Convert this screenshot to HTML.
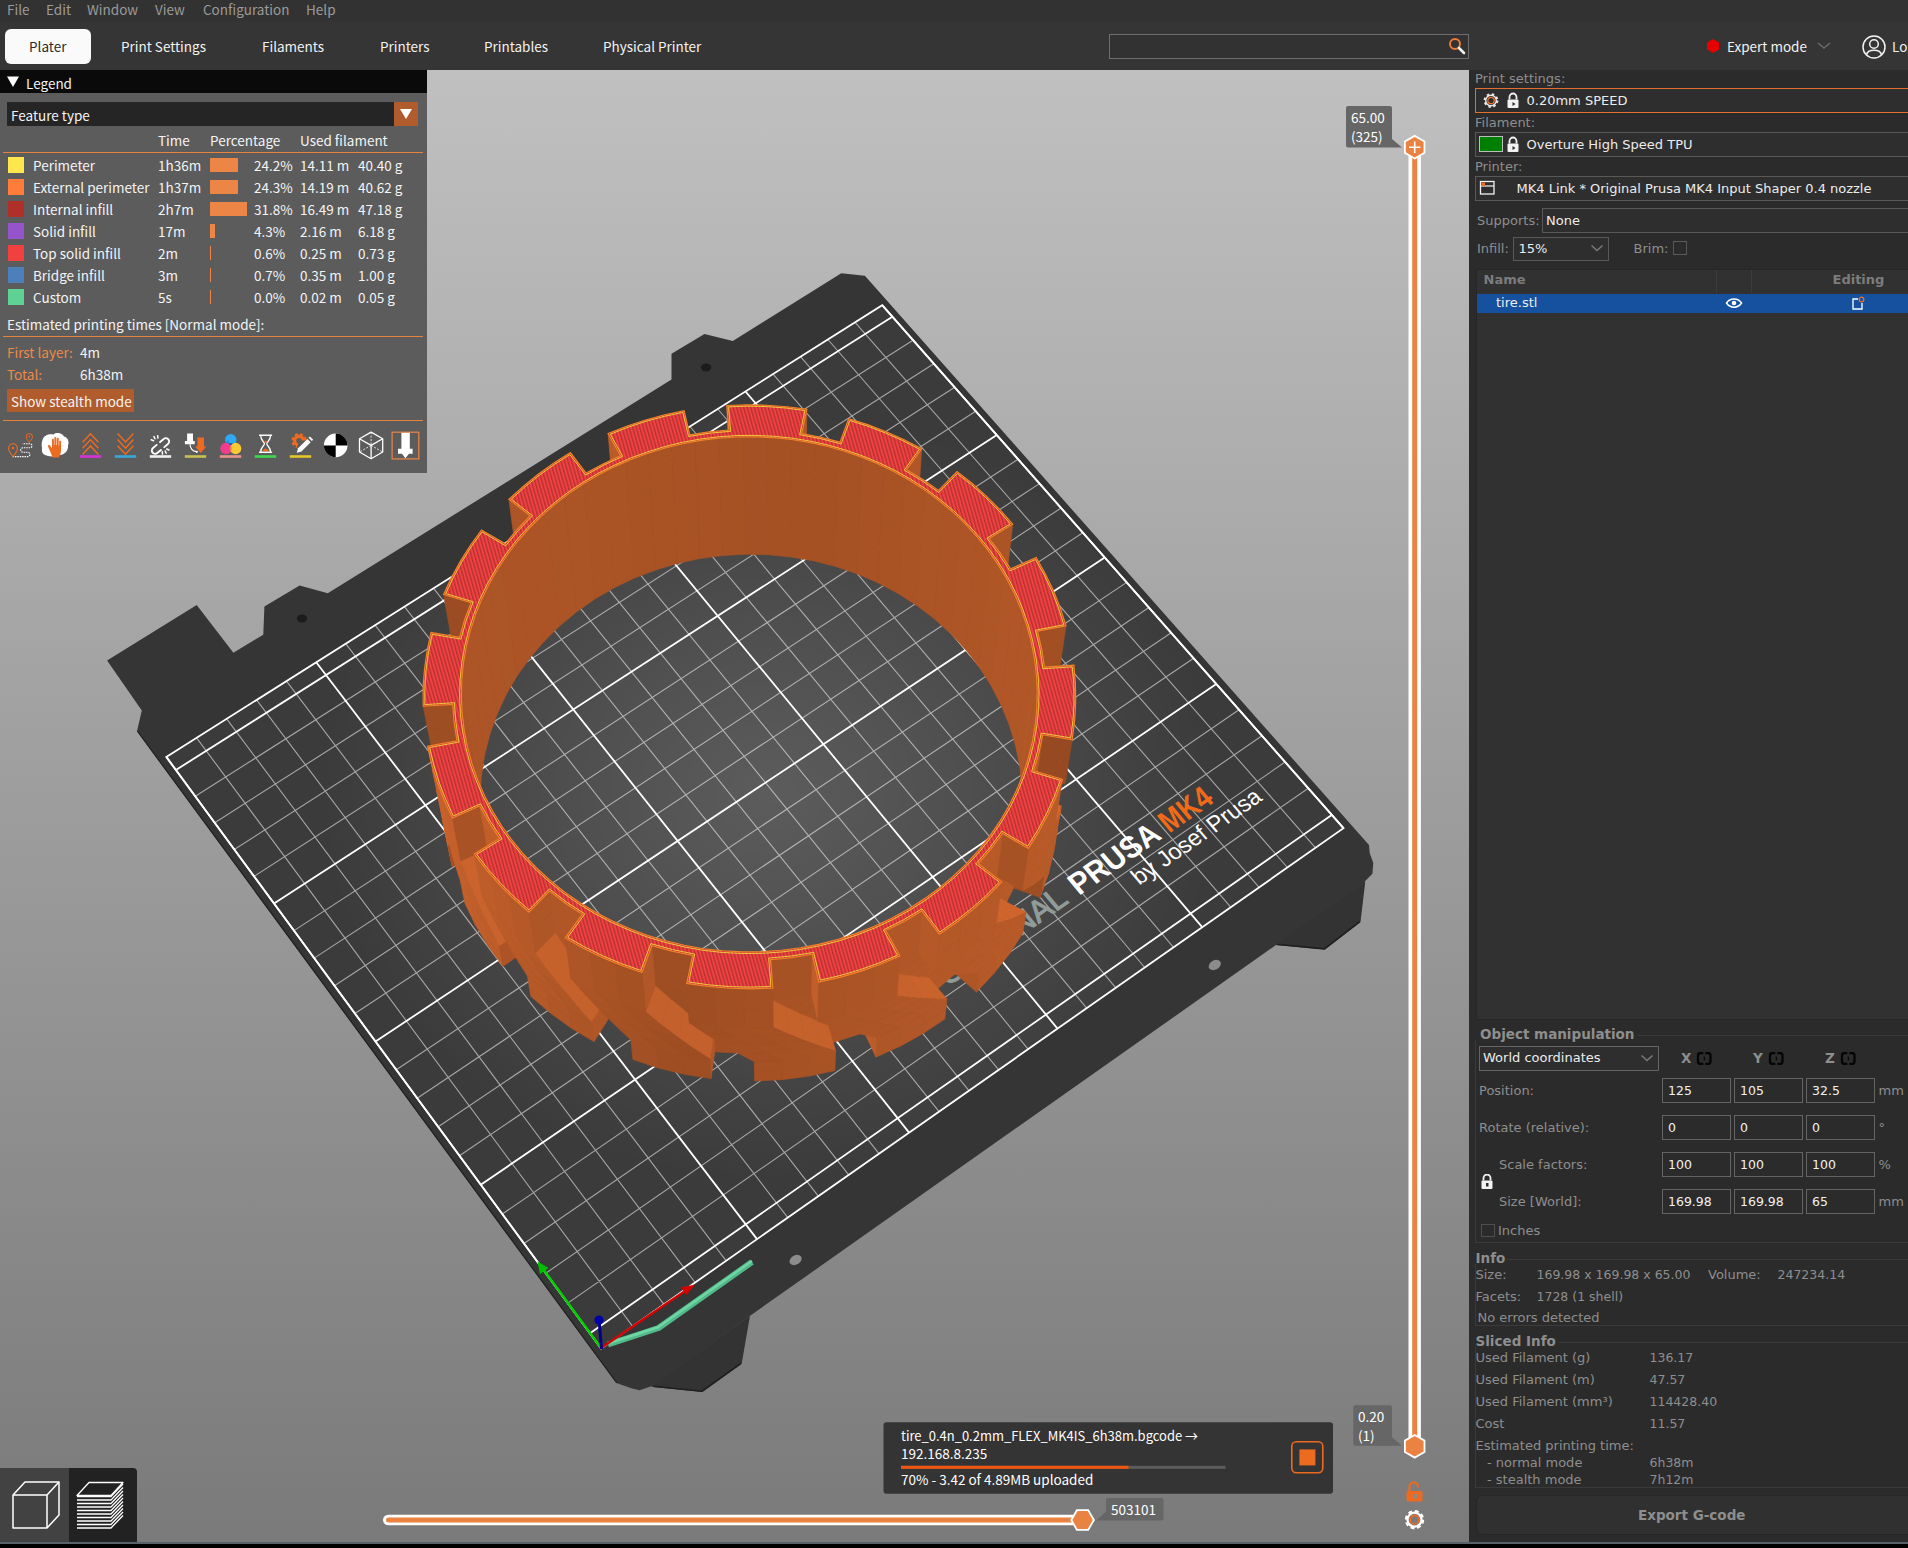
<!DOCTYPE html>
<html><head><meta charset="utf-8"><title>PrusaSlicer</title>
<style>
html,body{margin:0;padding:0;background:#000;}
body{width:1908px;height:1548px;position:relative;overflow:hidden;font-family:"DejaVu Sans","Liberation Sans",sans-serif;font-size:13px;color:#e6e6e6;}
.abs{position:absolute;white-space:nowrap;}
.ui{font-family:"Noto Sans CJK SC","DejaVu Sans Condensed","Liberation Sans",sans-serif;font-size:13.5px;line-height:20px;}
.wx{font-family:"DejaVu Sans","Liberation Sans",sans-serif;font-size:13px;line-height:18px;}
.menubar{position:absolute;left:0;top:0;width:1908px;height:21px;background:#323232;}
.menubar span{position:absolute;top:-1.5px;color:#9b9b9b;}
.topbar{position:absolute;left:0;top:21px;width:1908px;height:49px;background:#353535;}
.tab{position:absolute;top:15px;color:#f2f2f2;white-space:nowrap;}
.tabsel{position:absolute;left:5px;top:8px;width:86px;height:35px;border-radius:6px;background:#fafafa;}
.search{position:absolute;left:1109px;top:13px;width:358px;height:23px;border:1px solid #6e6e6e;background:#323232;}
.legend{position:absolute;left:0;top:70px;width:427px;height:403px;background:#5c5c5c;}
.legend .hdr{position:absolute;left:0;top:0;width:427px;height:23px;background:#0a0a0a;}
.legend .t{position:absolute;color:#f4f4f4;white-space:nowrap;}
.legend .o{color:#ec8a48;}
.oline{position:absolute;left:3px;width:420px;height:1px;background:#e8833e;}
.sw{position:absolute;left:8px;width:16px;height:16px;}
.bar{position:absolute;left:210px;height:14px;background:#ed8546;}
.right{position:absolute;left:1469px;top:70px;width:439px;height:1472px;background:#2b2b2b;overflow:hidden;}
.right .l{position:absolute;color:#8e8e8e;white-space:nowrap;}
.right .v{position:absolute;color:#ececec;white-space:nowrap;}
.right .b{position:absolute;color:#8e8e8e;font-weight:bold;font-size:13.5px;white-space:nowrap;}
.right .hd{font-size:13px;color:#7c7c7c;}
.right .n{font-size:12.5px;}
.box{position:absolute;border:1px solid #595959;background:#313131;box-sizing:border-box;}
.inp{position:absolute;border:1px solid #646464;background:#2b2b2b;box-sizing:border-box;height:25px;width:69px;}
.inp span{position:absolute;left:5px;top:3px;color:#f0f0f0;font-size:12.5px;}
.hline{position:absolute;height:1px;background:#3a3a3a;}
.vline{position:absolute;width:1px;background:#3a3a3a;}
.bottomline{position:absolute;left:0;top:1541.5px;width:1908px;height:2.5px;background:#57626a;}
</style></head>
<body>
<div class="menubar"><span class="ui" style="left:7px">File</span><span class="ui" style="left:46px">Edit</span><span class="ui" style="left:87px">Window</span><span class="ui" style="left:155px">View</span><span class="ui" style="left:203px">Configuration</span><span class="ui" style="left:306px">Help</span></div>
<div class="topbar"><div class="tabsel"></div><span class="tab ui" style="left:29px;color:#2a2a2a">Plater</span><span class="tab ui" style="left:121px">Print Settings</span><span class="tab ui" style="left:262px">Filaments</span><span class="tab ui" style="left:380px">Printers</span><span class="tab ui" style="left:484px">Printables</span><span class="tab ui" style="left:603px">Physical Printer</span>
<div class="search"></div>
<svg class="abs" style="left:1446px;top:14px" width="22" height="22" viewBox="0 0 22 22"><circle cx="9" cy="9" r="5" fill="none" stroke="#ed7b36" stroke-width="2"/><line x1="13" y1="13" x2="18" y2="18" stroke="#f0f0f0" stroke-width="2.6" stroke-linecap="round"/></svg>
<svg class="abs" style="left:1704px;top:16px" width="18" height="18" viewBox="-9 -9 18 18"><polygon points="0,-7 6,-3.5 6,3.5 0,7 -6,3.5 -6,-3.5" fill="#e60000"/></svg>
<span class="tab ui" style="left:1727px">Expert mode</span>
<svg class="abs" style="left:1816px;top:20px" width="16" height="10" viewBox="0 0 16 10"><polyline points="2,2 8,7 14,2" fill="none" stroke="#6a6a6a" stroke-width="1.6"/></svg>
<svg class="abs" style="left:1861px;top:13px" width="26" height="26" viewBox="-13 -13 26 26"><circle r="11" fill="none" stroke="#f2f2f2" stroke-width="1.5"/><circle cy="-3" r="4.3" fill="none" stroke="#f2f2f2" stroke-width="1.5"/><path d="M-7.6,8 C-6.5,1.5 6.5,1.5 7.6,8" fill="none" stroke="#f2f2f2" stroke-width="1.5"/></svg>
<span class="tab ui" style="left:1892px">Log in</span>
</div>
<svg style="position:absolute;left:0;top:70px" width="1469" height="1472" viewBox="0 70 1469 1472">
<defs>
<linearGradient id="bg" x1="0" y1="0" x2="0" y2="1"><stop offset="0" stop-color="#c0c0c0"/><stop offset="1" stop-color="#7a7a7a"/></linearGradient>
<radialGradient id="hl"><stop offset="0" stop-color="#ffffff" stop-opacity="0.17"/><stop offset="0.45" stop-color="#ffffff" stop-opacity="0.10"/><stop offset="1" stop-color="#ffffff" stop-opacity="0"/></radialGradient>
<pattern id="redstripe" width="3.4" height="3.4" patternUnits="userSpaceOnUse" patternTransform="rotate(-16)"><rect width="3.4" height="3.4" fill="#f04242"/><rect width="1.4" height="3.4" fill="#b83030"/></pattern>
</defs>
<rect x="0" y="70" width="1469" height="1472" fill="url(#bg)"/>
<polygon points="1364.3,883.7 1359.8,921.7 1324.5,948.8 1275.7,944.3" fill="#333333" stroke="#333333" stroke-width="1.5"/>
<polygon points="748.9,1317.5 741.0,1363.3 702.1,1391.2 653.3,1386.3" fill="#333333" stroke="#333333" stroke-width="1.5"/>
<path d="M1359.8,921.7 L1324.5,948.8 L1275.7,944.3 M741,1363.3 L702.1,1391.2 L653.3,1386.3" fill="none" stroke="#1f1f1f" stroke-width="1.6"/>
<polygon points="107.1,660.5 196.7,605.0 233.4,652.7 263.3,634.7 264.4,606.5 299.6,585.6 327.8,593.3 671.5,379.5 671.5,353.7 704.5,333.9 732.8,341.1 841.3,273.2 864.9,275.7 1369.0,845.0 1369.7,853.0 1373.3,862.9 1372.4,873.7 1365.2,881.0 1364.3,883.7 1277.7,943.8 749.0,1316.5 653.3,1386.3 651.3,1386.3 639.4,1390.2 631.4,1388.2 616.4,1383.1 137.0,731.3 141.8,710.6" fill="#353535"/>
<line x1="137.3" y1="731" x2="616.8" y2="1382.8" stroke="#222222" stroke-width="1.2"/>
<clipPath id="areaclip"><polygon points="601.1,1348.4 1343.5,828.2 882.2,305.2 166.3,756.9"/></clipPath>
<polygon points="601.1,1348.4 1343.5,828.2 882.2,305.2 166.3,756.9" fill="#3b3b3b"/>
<g clip-path="url(#areaclip)"><ellipse cx="770" cy="795" rx="450" ry="385" fill="url(#hl)"/></g>
<path d="M632.6,1326.3L196.6,737.8M663.9,1304.4L226.7,718.8M695.1,1282.5L256.6,699.9M726.2,1260.8L286.5,681.1M787.8,1217.6L345.7,643.7M818.3,1196.2L375.1,625.1M848.7,1174.9L404.4,606.7M879.0,1153.7L433.6,588.3M939.1,1111.6L491.4,551.8M968.9,1090.7L520.2,533.6M998.6,1069.9L548.8,515.6M1028.1,1049.2L577.3,497.6M1086.7,1008.1L633.9,461.9M1115.8,987.8L661.9,444.2M1144.7,967.5L689.9,426.5M1173.5,947.3L717.8,409.0M1230.7,907.2L773.1,374.1M1259.1,887.3L800.5,356.7M1287.4,867.5L827.9,339.5M1315.5,847.8L855.1,322.3M567.8,1303.1L1308.3,788.3M545.8,1273.2L1285.1,762.0M524.0,1243.5L1262.0,735.8M502.3,1214.0L1239.0,709.8M459.4,1155.7L1193.6,658.3M438.2,1126.8L1171.2,632.8M417.2,1098.2L1148.9,607.5M396.3,1069.8L1126.7,582.4M354.9,1013.5L1082.8,532.7M334.5,985.7L1061.1,508.0M314.2,958.1L1039.5,483.6M294.0,930.6L1018.1,459.3M254.1,876.3L975.7,411.2M234.3,849.5L954.7,387.3M214.7,822.8L933.8,363.7M195.3,796.3L913.0,340.2" stroke="#ffffff" stroke-opacity="0.55" stroke-width="1.1" fill="none"/>
<path d="M601.1,1348.4L166.3,756.9M757.0,1239.1L316.2,662.3M909.1,1132.6L462.6,570.0M1057.5,1028.6L605.6,479.7M1202.2,927.2L745.5,391.5M1343.5,828.2L882.2,305.2M590.0,1333.2L1331.7,814.9M480.8,1184.7L1216.3,683.9M375.5,1041.5L1104.7,557.5M274.0,903.4L996.8,435.1M175.9,770.0L892.4,316.8" stroke="#ffffff" stroke-width="1.8" fill="none"/>
<polygon points="601.1,1348.4 1343.5,828.2 882.2,305.2 166.3,756.9" fill="none" stroke="#ffffff" stroke-width="1.8"/>
<g transform="matrix(2.8768 -1.9874 2.2824 2.7169 1079.04 895.83)" font-family="'Liberation Sans',sans-serif"><text x="0" y="0" font-size="8.9" font-weight="700" fill="#ffffff" textLength="29.2" lengthAdjust="spacingAndGlyphs">PRUSA</text><text x="31.4" y="0" font-size="8.9" font-weight="700" fill="#f06a1a" textLength="16.0" lengthAdjust="spacingAndGlyphs">MK4</text><text x="-3.2" y="0" font-size="8.9" font-weight="400" fill="#919c9a" stroke="#919c9a" stroke-width="0.3" text-anchor="end">ORIGINAL</text></g>
<g transform="matrix(2.8591 -1.9827 2.3011 2.7103 1139.37 885.47)" font-family="'Liberation Sans',sans-serif"><text x="0" y="0" font-size="6.6" fill="#ffffff" textLength="43.4" lengthAdjust="spacingAndGlyphs">by Josef Prusa</text></g>
<ellipse cx="302" cy="618.5" rx="5.2" ry="4" fill="#1c1c1c"/>
<ellipse cx="706.1" cy="367.5" rx="5.2" ry="4" fill="#1c1c1c"/>
<ellipse cx="795.6" cy="1260" rx="6.5" ry="4.6" fill="#8c8c8c" transform="rotate(-30 795.6 1260)"/>
<ellipse cx="1214.8" cy="965" rx="6.5" ry="4.6" fill="#8c8c8c" transform="rotate(-30 1214.8 965)"/>
<polyline points="608,1344.5 658.5,1328 752,1262" fill="none" stroke="#52b98a" stroke-width="6" stroke-linejoin="round"/>
<polyline points="608,1343.5 658.5,1327 752,1261" fill="none" stroke="#6fd6a4" stroke-width="2.4" stroke-linejoin="round"/>
<line x1="601" y1="1348" x2="688" y2="1289" stroke="#d60000" stroke-width="2.4"/>
<polygon points="695,1284.5 681,1287.5 686.5,1295" fill="#d60000"/>
<line x1="601" y1="1348" x2="543" y2="1269" stroke="#00d000" stroke-width="2.4"/>
<polygon points="537.5,1261.5 540,1274 548.5,1268" fill="#00c000"/>
<line x1="601.5" y1="1349" x2="599.2" y2="1321" stroke="#00008c" stroke-width="3"/>
<circle cx="599" cy="1320" r="4.6" fill="#0000a8"/>
<g stroke-width="0.7" stroke-linejoin="round">
<polygon points="747.8,547.1 747.5,523.5 747.3,511.1 747.6,534.8" fill="#b15727" stroke="#b15727"/>
<polygon points="679.5,555.5 672.6,532.8 672.0,520.4 678.9,543.3" fill="#bf5e2a" stroke="#bf5e2a"/>
<polygon points="851.8,564.1 861.5,542.1 862.0,529.8 852.2,551.9" fill="#b15727" stroke="#b15727"/>
<polygon points="747.6,534.8 747.3,511.1 747.0,498.6 747.3,522.4" fill="#b15727" stroke="#b15727"/>
<polygon points="584.2,597.3 568.0,578.4 566.7,566.3 582.9,585.2" fill="#b45828" stroke="#b45828"/>
<polygon points="678.9,543.3 672.0,520.4 671.3,507.9 678.2,530.9" fill="#bf5e2a" stroke="#bf5e2a"/>
<polygon points="852.2,551.9 862.0,529.8 862.5,517.3 852.7,539.5" fill="#b15727" stroke="#b15727"/>
<polygon points="941.8,615.3 960.4,598.1 961.5,586.0 942.8,603.3" fill="#ae5526" stroke="#ae5526"/>
<polygon points="784.9,524.2 788.2,500.6 802.9,491.9 798.3,515.4" fill="#ed7434" stroke="#ed7434"/>
<polygon points="678.2,530.9 671.3,507.9 685.1,494.1 690.8,517.5" fill="#e97233" stroke="#e97233"/>
<polygon points="582.9,585.2 566.7,566.3 565.3,554.0 581.6,573.0" fill="#b45828" stroke="#b45828"/>
<polygon points="942.8,603.3 961.5,586.0 962.6,573.8 943.8,591.2" fill="#ae5526" stroke="#ae5526"/>
<polygon points="512.4,668.8 489.1,656.7 487.2,645.0 510.7,657.1" fill="#a55124" stroke="#a55124"/>
<polygon points="886.9,553.9 900.1,533.1 913.6,529.3 899.2,549.6" fill="#eb7334" stroke="#eb7334"/>
<polygon points="690.8,517.5 685.1,494.1 699.2,480.9 703.7,504.5" fill="#ea7333" stroke="#ea7333"/>
<polygon points="798.3,515.4 802.9,491.9 817.7,483.6 811.7,507.1" fill="#ed7434" stroke="#ed7434"/>
<polygon points="581.6,573.0 565.3,554.0 576.3,535.7 591.7,555.5" fill="#e06e31" stroke="#e06e31"/>
<polygon points="1004.7,694.0 1029.7,684.3 1031.2,672.7 1006.1,682.4" fill="#a75225" stroke="#a75225"/>
<polygon points="591.7,555.5 576.3,535.7 587.8,517.9 602.1,538.4" fill="#e16e31" stroke="#e16e31"/>
<polygon points="703.7,504.5 699.2,480.9 713.6,468.1 716.8,492.0" fill="#eb7334" stroke="#eb7334"/>
<polygon points="510.7,657.1 487.2,645.0 485.3,633.0 508.9,645.2" fill="#a55124" stroke="#a55124"/>
<polygon points="899.2,549.6 913.6,529.3 926.9,525.9 911.3,545.8" fill="#eb7334" stroke="#eb7334"/>
<polygon points="811.7,507.1 817.7,483.6 832.4,475.9 825.2,499.2" fill="#ed7434" stroke="#ed7434"/>
<polygon points="969.9,616.3 991.3,601.3 1001.7,601.7 979.3,615.8" fill="#e47032" stroke="#e47032"/>
<polygon points="602.1,538.4 587.8,517.9 599.9,500.4 613.1,521.6" fill="#e36f32" stroke="#e36f32"/>
<polygon points="1006.1,682.4 1031.2,672.7 1032.8,660.9 1007.6,670.6" fill="#a75225" stroke="#a75225"/>
<polygon points="716.8,492.0 713.6,468.1 728.2,455.8 730.1,479.9" fill="#eb7334" stroke="#eb7334"/>
<polygon points="508.9,645.2 485.3,633.0 491.9,611.5 514.9,624.7" fill="#da6b30" stroke="#da6b30"/>
<polygon points="475.3,760.6 447.9,757.4 445.8,746.1 473.3,749.3" fill="#994b22" stroke="#994b22"/>
<polygon points="825.2,499.2 832.4,475.9 847.2,468.8 838.6,491.8" fill="#ed7434" stroke="#ed7434"/>
<polygon points="911.3,545.8 926.9,525.9 940.0,523.1 923.2,542.3" fill="#ea7333" stroke="#ea7333"/>
<polygon points="613.1,521.6 599.9,500.4 612.3,483.4 624.4,505.1" fill="#e47032" stroke="#e47032"/>
<polygon points="514.9,624.7 491.9,611.5 499.1,590.1 521.4,604.4" fill="#db6b30" stroke="#db6b30"/>
<polygon points="979.3,615.8 1001.7,601.7 1011.6,602.5 988.3,615.7" fill="#e26f32" stroke="#e26f32"/>
<polygon points="473.3,749.3 445.8,746.1 443.6,734.7 471.3,737.9" fill="#994b22" stroke="#994b22"/>
<polygon points="521.4,604.4 499.1,590.1 507.0,568.9 528.5,584.2" fill="#db6b30" stroke="#db6b30"/>
<polygon points="923.2,542.3 940.0,523.1 952.8,520.7 934.9,539.3" fill="#e97233" stroke="#e97233"/>
<polygon points="730.1,479.9 728.2,455.8 727.6,430.9 729.5,455.3" fill="#c35f2b" stroke="#c35f2b"/>
<polygon points="801.3,483.4 806.2,459.6 806.5,434.8 801.5,458.8" fill="#b25727" stroke="#b25727"/>
<polygon points="1021.4,703.1 1048.1,696.5 1053.8,699.9 1026.4,705.3" fill="#da6b30" stroke="#da6b30"/>
<polygon points="624.4,505.1 612.3,483.4 610.3,458.7 622.5,480.7" fill="#bb5b29" stroke="#bb5b29"/>
<polygon points="528.5,584.2 507.0,568.9 515.5,548.0 536.3,564.2" fill="#dc6c30" stroke="#dc6c30"/>
<polygon points="988.3,615.7 1011.6,602.5 1021.1,603.7 996.9,615.9" fill="#e16e31" stroke="#e16e31"/>
<polygon points="471.3,737.9 443.6,734.7 444.6,711.5 472.1,715.9" fill="#d4682e" stroke="#d4682e"/>
<polygon points="903.5,518.9 918.3,498.4 920.0,473.9 905.0,494.6" fill="#b05627" stroke="#b05627"/>
<polygon points="472.1,715.9 444.6,711.5 446.3,688.1 473.6,693.8" fill="#d4682f" stroke="#d4682f"/>
<polygon points="1026.4,705.3 1053.8,699.9 1058.7,703.4 1030.9,707.7" fill="#da6b30" stroke="#da6b30"/>
<polygon points="996.9,615.9 1021.1,603.7 1030.0,605.2 1005.0,616.4" fill="#e06e31" stroke="#e06e31"/>
<polygon points="729.5,455.3 727.6,430.9 726.9,405.5 728.8,430.0" fill="#c35f2b" stroke="#c35f2b"/>
<polygon points="536.3,564.2 515.5,548.0 512.2,524.0 533.2,540.3" fill="#ad5526" stroke="#ad5526"/>
<polygon points="473.6,693.8 446.3,688.1 448.7,664.8 475.8,671.6" fill="#d5692f" stroke="#d5692f"/>
<polygon points="801.5,458.8 806.5,434.8 806.8,409.3 801.7,433.5" fill="#b25727" stroke="#b25727"/>
<polygon points="622.5,480.7 610.3,458.7 608.1,433.5 620.5,455.7" fill="#bb5b29" stroke="#bb5b29"/>
<polygon points="475.8,671.6 448.7,664.8 451.9,641.5 478.6,649.5" fill="#d6692f" stroke="#d6692f"/>
<polygon points="984.2,586.6 1007.1,572.5 1009.9,548.7 986.7,562.9" fill="#ab5425" stroke="#ab5425"/>
<polygon points="1030.9,707.7 1058.7,703.4 1063.0,707.1 1034.8,710.2" fill="#d96a30" stroke="#d96a30"/>
<polygon points="905.0,494.6 920.0,473.9 921.7,448.8 906.5,469.7" fill="#b05627" stroke="#b05627"/>
<polygon points="533.2,540.3 512.2,524.0 508.9,499.3 530.1,515.8" fill="#ad5526" stroke="#ad5526"/>
<polygon points="478.6,649.5 451.9,641.5 447.8,618.3 474.8,626.4" fill="#9c4c22" stroke="#9c4c22"/>
<polygon points="1034.8,710.2 1063.0,707.1 1066.7,710.9 1038.0,712.8" fill="#d86a2f" stroke="#d86a2f"/>
<polygon points="986.7,562.9 1009.9,548.7 1012.7,524.2 989.2,538.6" fill="#ab5425" stroke="#ab5425"/>
<polygon points="1031.2,677.7 1059.0,672.4 1062.5,649.5 1034.3,654.8" fill="#a24f24" stroke="#a24f24"/>
<polygon points="474.8,626.4 447.8,618.3 443.6,594.5 471.0,602.7" fill="#9c4c22" stroke="#9c4c22"/>
<polygon points="1034.3,654.8 1062.5,649.5 1066.0,625.9 1037.5,631.3" fill="#a24f24" stroke="#a24f24"/>
<polygon points="768.1,554.7 745.2,554.2 743.0,436.8 767.3,437.3" fill="#a65125" stroke="#a65125"/>
<polygon points="745.2,554.2 722.4,555.6 718.7,438.2 743.0,436.8" fill="#a75225" stroke="#a75225"/>
<polygon points="790.9,556.9 768.1,554.7 767.3,437.3 791.5,439.5" fill="#a65124" stroke="#a65124"/>
<polygon points="722.4,555.6 699.7,558.6 694.7,441.4 718.7,438.2" fill="#a85225" stroke="#a85225"/>
<polygon points="813.5,560.8 790.9,556.9 791.5,439.5 815.3,443.6" fill="#a55124" stroke="#a55124"/>
<polygon points="699.7,558.6 677.4,563.4 671.1,446.4 694.7,441.4" fill="#a85225" stroke="#a85225"/>
<polygon points="835.6,566.4 813.5,560.8 815.3,443.6 838.8,449.5" fill="#a65124" stroke="#a65124"/>
<polygon points="677.4,563.4 655.6,569.9 648.0,453.2 671.1,446.4" fill="#a95325" stroke="#a95325"/>
<polygon points="857.1,573.8 835.6,566.4 838.8,449.5 861.6,457.1" fill="#a75225" stroke="#a75225"/>
<polygon points="655.6,569.9 634.4,578.1 625.5,461.7 648.0,453.2" fill="#a95325" stroke="#a95325"/>
<polygon points="877.9,582.7 857.1,573.8 861.6,457.1 883.6,466.5" fill="#a85225" stroke="#a85225"/>
<polygon points="634.4,578.1 614.1,587.8 604.0,471.9 625.5,461.7" fill="#aa5325" stroke="#aa5325"/>
<polygon points="897.8,593.3 877.9,582.7 883.6,466.5 904.7,477.5" fill="#a95325" stroke="#a95325"/>
<polygon points="614.1,587.8 594.8,599.1 583.5,483.7 604.0,471.9" fill="#aa5425" stroke="#aa5425"/>
<polygon points="916.6,605.3 897.8,593.3 904.7,477.5 924.7,490.1" fill="#aa5325" stroke="#aa5325"/>
<polygon points="594.8,599.1 576.5,611.9 564.1,497.1 583.5,483.7" fill="#ab5426" stroke="#ab5426"/>
<polygon points="934.3,618.8 916.6,605.3 924.7,490.1 943.5,504.2" fill="#ab5426" stroke="#ab5426"/>
<polygon points="576.5,611.9 559.5,626.1 546.0,511.9 564.1,497.1" fill="#ab5426" stroke="#ab5426"/>
<polygon points="950.7,633.7 934.3,618.8 943.5,504.2 960.9,519.7" fill="#ac5426" stroke="#ac5426"/>
<polygon points="559.5,626.1 543.9,641.5 529.4,528.0 546.0,511.9" fill="#ac5426" stroke="#ac5426"/>
<polygon points="965.7,649.7 950.7,633.7 960.9,519.7 976.8,536.5" fill="#ad5526" stroke="#ad5526"/>
<polygon points="543.9,641.5 529.7,658.2 514.3,545.4 529.4,528.0" fill="#ac5426" stroke="#ac5426"/>
<polygon points="979.1,667.0 965.7,649.7 976.8,536.5 991.1,554.5" fill="#ae5526" stroke="#ae5526"/>
<polygon points="529.7,658.2 517.1,675.9 500.9,564.0 514.3,545.4" fill="#ac5426" stroke="#ac5426"/>
<polygon points="990.9,685.2 979.1,667.0 991.1,554.5 1003.6,573.5" fill="#af5626" stroke="#af5626"/>
<polygon points="517.1,675.9 506.2,694.5 489.4,583.5 500.9,564.0" fill="#ac5526" stroke="#ac5526"/>
<polygon points="1000.9,704.4 990.9,685.2 1003.6,573.5 1014.3,593.6" fill="#b05627" stroke="#b05627"/>
<polygon points="506.2,694.5 497.2,714.0 479.7,603.9 489.4,583.5" fill="#ad5526" stroke="#ad5526"/>
<polygon points="1009.1,724.3 1000.9,704.4 1014.3,593.6 1023.0,614.4" fill="#b05627" stroke="#b05627"/>
<polygon points="497.2,714.0 489.9,734.2 472.0,625.0 479.7,603.9" fill="#ad5526" stroke="#ad5526"/>
<polygon points="1015.4,744.8 1009.1,724.3 1023.0,614.4 1029.7,635.9" fill="#b15727" stroke="#b15727"/>
<polygon points="489.9,734.2 484.6,755.0 466.3,646.7 472.0,625.0" fill="#ad5526" stroke="#ad5526"/>
<polygon points="1019.7,765.8 1015.4,744.8 1029.7,635.9 1034.3,657.8" fill="#b15727" stroke="#b15727"/>
<polygon points="484.6,755.0 481.4,776.1 462.8,668.9 466.3,646.7" fill="#ad5526" stroke="#ad5526"/>
<polygon points="1022.0,787.1 1019.7,765.8 1034.3,657.8 1036.8,680.2" fill="#b25727" stroke="#b25727"/>
<polygon points="481.4,776.1 480.1,797.5 461.4,691.2 462.8,668.9" fill="#ac5526" stroke="#ac5526"/>
<polygon points="1022.2,808.6 1022.0,787.1 1036.8,680.2 1037.1,702.7" fill="#b25727" stroke="#b25727"/>
<polygon points="480.1,797.5 480.9,818.9 462.2,713.7 461.4,691.2" fill="#ac5426" stroke="#ac5426"/>
<polygon points="1020.3,830.1 1022.2,808.6 1037.1,702.7 1035.2,725.2" fill="#b25727" stroke="#b25727"/>
<polygon points="480.9,818.9 483.8,840.3 465.2,736.1 462.2,713.7" fill="#ac5426" stroke="#ac5426"/>
<polygon points="1030.4,789.5 1058.3,789.2 1060.1,778.1 1032.0,778.4" fill="#9d4d22" stroke="#9d4d22"/>
<polygon points="1032.0,778.4 1060.1,778.1 1061.9,766.8 1033.6,767.1" fill="#9d4d22" stroke="#9d4d22"/>
<polygon points="447.3,842.7 452.2,866.2 450.1,855.5 445.1,831.9" fill="#c9622c" stroke="#c9622c"/>
<polygon points="479.5,859.4 452.2,866.2 450.1,855.5 477.5,848.7" fill="#a35024" stroke="#a35024"/>
<polygon points="1048.1,874.6 1053.9,851.3 1055.6,840.4 1049.9,863.9" fill="#b95b29" stroke="#b95b29"/>
<polygon points="479.5,859.4 491.1,893.0 489.2,882.4 477.5,848.7" fill="#c6612c" stroke="#c6612c"/>
<polygon points="1040.2,897.5 1048.1,874.6 1049.9,863.9 1041.9,886.9" fill="#b95b29" stroke="#b95b29"/>
<polygon points="445.1,831.9 450.1,855.5 447.9,844.6 442.9,820.9" fill="#c9622c" stroke="#c9622c"/>
<polygon points="1013.6,887.9 1040.2,897.5 1041.9,886.9 1015.2,877.2" fill="#9e4e23" stroke="#9e4e23"/>
<polygon points="464.9,903.1 475.5,925.1 473.5,914.7 462.8,892.6" fill="#c3602b" stroke="#c3602b"/>
<polygon points="477.5,848.7 450.1,855.5 447.9,844.6 475.5,837.8" fill="#a35024" stroke="#a35024"/>
<polygon points="997.7,920.1 1013.6,887.9 1015.2,877.2 999.2,909.6" fill="#b95b29" stroke="#b95b29"/>
<polygon points="1049.9,863.9 1055.6,840.4 1057.4,829.5 1051.6,853.1" fill="#b95b29" stroke="#b95b29"/>
<polygon points="477.5,848.7 489.2,882.4 487.3,871.6 475.5,837.8" fill="#c6612c" stroke="#c6612c"/>
<polygon points="475.5,925.1 488.3,946.3 486.4,936.0 473.5,914.7" fill="#c15e2a" stroke="#c15e2a"/>
<polygon points="1032.7,802.3 1061.0,805.6 1060.7,810.0 1032.4,805.5" fill="#d5682f" stroke="#d5682f"/>
<polygon points="1041.9,886.9 1049.9,863.9 1051.6,853.1 1043.6,876.2" fill="#b95b29" stroke="#b95b29"/>
<polygon points="1009.3,953.9 1022.8,933.1 1024.4,922.7 1010.8,943.6" fill="#b85a28" stroke="#b85a28"/>
<polygon points="1057.4,829.5 1061.0,805.6 1060.7,810.0 1055.9,833.9" fill="#b95b29" stroke="#b95b29"/>
<polygon points="1015.2,877.2 1041.9,886.9 1043.6,876.2 1016.7,866.4" fill="#9e4e23" stroke="#9e4e23"/>
<polygon points="475.5,837.8 447.9,844.6 442.8,821.7 470.9,816.1" fill="#ce652d" stroke="#ce652d"/>
<polygon points="488.3,946.3 503.1,966.4 501.2,956.2 486.4,936.0" fill="#be5d2a" stroke="#be5d2a"/>
<polygon points="525.9,950.3 503.1,966.4 501.2,956.2 524.3,940.1" fill="#ac5426" stroke="#ac5426"/>
<polygon points="462.8,892.6 473.5,914.7 471.5,904.2 460.7,881.9" fill="#c3602b" stroke="#c3602b"/>
<polygon points="999.2,909.6 1015.2,877.2 1016.7,866.4 1000.6,899.0" fill="#b95b29" stroke="#b95b29"/>
<polygon points="525.9,950.3 551.3,977.5 549.7,967.3 524.3,940.1" fill="#ba5b29" stroke="#ba5b29"/>
<polygon points="475.5,837.8 487.3,871.6 480.8,850.5 470.9,816.1" fill="#c7612c" stroke="#c7612c"/>
<polygon points="993.8,973.6 1009.3,953.9 1010.8,943.6 995.2,963.5" fill="#b75a28" stroke="#b75a28"/>
<polygon points="1051.6,853.1 1057.4,829.5 1055.9,833.9 1048.7,857.3" fill="#b95b29" stroke="#b95b29"/>
<polygon points="470.9,816.1 442.8,821.7 438.5,798.4 466.9,794.1" fill="#ce652d" stroke="#ce652d"/>
<polygon points="473.5,914.7 486.4,936.0 484.4,925.5 471.5,904.2" fill="#c15e2a" stroke="#c15e2a"/>
<polygon points="976.5,992.1 993.8,973.6 995.2,963.5 977.7,982.0" fill="#b65928" stroke="#b65928"/>
<polygon points="955.5,973.6 976.5,992.1 977.7,982.0 956.7,963.4" fill="#af5626" stroke="#af5626"/>
<polygon points="1032.4,805.5 1060.7,810.0 1059.8,814.4 1031.5,808.6" fill="#d4682e" stroke="#d4682e"/>
<polygon points="926.7,997.9 955.5,973.6 956.7,963.4 927.7,987.8" fill="#b45828" stroke="#b45828"/>
<polygon points="1043.6,876.2 1051.6,853.1 1048.7,857.3 1039.4,880.2" fill="#b95b29" stroke="#b95b29"/>
<polygon points="470.9,816.1 480.8,850.5 474.9,829.0 466.9,794.1" fill="#c8622c" stroke="#c8622c"/>
<polygon points="1010.8,943.6 1024.4,922.7 1026.0,912.1 1012.3,933.2" fill="#b85a28" stroke="#b85a28"/>
<polygon points="460.7,881.9 471.5,904.2 463.2,882.4 453.6,859.6" fill="#c4602b" stroke="#c4602b"/>
<polygon points="530.9,996.4 550.4,1013.1 548.9,1003.1 529.2,986.3" fill="#b55928" stroke="#b55928"/>
<polygon points="486.4,936.0 501.2,956.2 499.3,945.9 484.4,925.5" fill="#be5d2a" stroke="#be5d2a"/>
<polygon points="1055.9,833.9 1060.7,810.0 1059.8,814.4 1053.5,838.1" fill="#b95b29" stroke="#b95b29"/>
<polygon points="524.3,940.1 501.2,956.2 499.3,945.9 522.5,929.6" fill="#ac5426" stroke="#ac5426"/>
<polygon points="466.9,794.1 438.5,798.4 434.9,774.9 463.6,771.8" fill="#cf662d" stroke="#cf662d"/>
<polygon points="524.3,940.1 549.7,967.3 548.2,957.0 522.5,929.6" fill="#ba5b29" stroke="#ba5b29"/>
<polygon points="1000.6,899.0 1016.7,866.4 1012.8,869.2 994.8,901.2" fill="#b95b29" stroke="#b95b29"/>
<polygon points="550.4,1013.1 571.5,1028.2 570.1,1018.3 548.9,1003.1" fill="#b15727" stroke="#b15727"/>
<polygon points="995.2,963.5 1010.8,943.6 1012.3,933.2 996.6,953.1" fill="#b75a28" stroke="#b75a28"/>
<polygon points="471.5,904.2 484.4,925.5 475.0,904.4 463.2,882.4" fill="#c15f2a" stroke="#c15f2a"/>
<polygon points="466.9,794.1 474.9,829.0 469.7,807.1 463.6,771.8" fill="#c9622c" stroke="#c9622c"/>
<polygon points="1048.7,857.3 1055.9,833.9 1053.5,838.1 1045.1,861.4" fill="#b95b29" stroke="#b95b29"/>
<polygon points="923.1,1033.5 944.8,1019.0 945.9,1009.0 924.1,1023.6" fill="#b25727" stroke="#b25727"/>
<polygon points="1031.5,808.6 1036.3,773.2 1036.6,776.2 1029.8,811.5" fill="#b95b29" stroke="#b95b29"/>
<polygon points="608.6,1018.4 643.9,1034.5 643.0,1024.6 607.4,1008.5" fill="#a95325" stroke="#a95325"/>
<polygon points="608.6,1018.4 594.0,1041.6 592.7,1031.8 607.4,1008.5" fill="#b15727" stroke="#b15727"/>
<polygon points="453.6,859.6 463.2,882.4 455.6,860.1 447.2,836.9" fill="#c5612b" stroke="#c5612b"/>
<polygon points="571.5,1028.2 594.0,1041.6 592.7,1031.8 570.1,1018.3" fill="#ae5526" stroke="#ae5526"/>
<polygon points="463.6,771.8 434.9,774.9 432.1,751.1 460.9,749.2" fill="#d0662e" stroke="#d0662e"/>
<polygon points="1000.6,899.0 1026.0,912.1 1019.7,915.5 994.8,901.2" fill="#cf652d" stroke="#cf652d"/>
<polygon points="977.7,982.0 995.2,963.5 996.6,953.1 979.0,971.8" fill="#b65928" stroke="#b65928"/>
<polygon points="956.7,963.4 977.7,982.0 979.0,971.8 957.8,953.1" fill="#af5626" stroke="#af5626"/>
<polygon points="900.1,1046.2 923.1,1033.5 924.1,1023.6 900.9,1036.5" fill="#b15727" stroke="#b15727"/>
<polygon points="827.0,1044.5 864.3,1032.4 864.8,1022.5 827.3,1034.7" fill="#ac5426" stroke="#ac5426"/>
<polygon points="484.4,925.5 499.3,945.9 488.8,925.4 475.0,904.4" fill="#bf5d2a" stroke="#bf5d2a"/>
<polygon points="927.7,987.8 956.7,963.4 957.8,953.1 928.7,977.6" fill="#b45828" stroke="#b45828"/>
<polygon points="1031.5,808.6 1059.8,814.4 1058.0,818.7 1029.8,811.5" fill="#d3672e" stroke="#d3672e"/>
<polygon points="864.3,1032.4 876.0,1057.1 876.6,1047.4 864.8,1022.5" fill="#bc5c29" stroke="#bc5c29"/>
<polygon points="522.5,929.6 499.3,945.9 488.8,925.4 513.0,910.2" fill="#c9622c" stroke="#c9622c"/>
<polygon points="1039.4,880.2 1048.7,857.3 1045.1,861.4 1034.4,883.9" fill="#b95b29" stroke="#b95b29"/>
<polygon points="1012.3,933.2 1026.0,912.1 1019.7,915.5 1004.7,936.0" fill="#b85a28" stroke="#b85a28"/>
<polygon points="529.2,986.3 548.9,1003.1 547.3,993.0 527.5,976.1" fill="#b55928" stroke="#b55928"/>
<polygon points="876.0,1057.1 900.1,1046.2 900.9,1036.5 876.6,1047.4" fill="#af5626" stroke="#af5626"/>
<polygon points="463.2,882.4 475.0,904.4 466.2,882.7 455.6,860.1" fill="#c3602b" stroke="#c3602b"/>
<polygon points="714.8,1051.8 754.3,1054.0 754.1,1044.2 714.3,1042.0" fill="#a24f24" stroke="#a24f24"/>
<polygon points="522.5,929.6 548.2,957.0 537.2,938.8 513.0,910.2" fill="#bb5b29" stroke="#bb5b29"/>
<polygon points="447.2,836.9 455.6,860.1 448.6,837.4 441.5,813.8" fill="#c7612c" stroke="#c7612c"/>
<polygon points="1053.5,838.1 1059.8,814.4 1058.0,818.7 1050.4,842.2" fill="#b95b29" stroke="#b95b29"/>
<polygon points="632.9,1059.4 658.2,1067.9 657.4,1058.2 631.9,1049.7" fill="#a35024" stroke="#a35024"/>
<polygon points="714.8,1051.8 711.0,1078.6 710.5,1069.0 714.3,1042.0" fill="#b25727" stroke="#b25727"/>
<polygon points="658.2,1067.9 684.4,1074.3 683.7,1064.7 657.4,1058.2" fill="#9f4e23" stroke="#9f4e23"/>
<polygon points="548.9,1003.1 570.1,1018.3 568.6,1008.3 547.3,993.0" fill="#b15727" stroke="#b15727"/>
<polygon points="994.8,901.2 1012.8,869.2 1008.2,871.7 988.3,903.0" fill="#b85a28" stroke="#b85a28"/>
<polygon points="996.6,953.1 1012.3,933.2 1004.7,936.0 987.9,955.3" fill="#b75a28" stroke="#b75a28"/>
<polygon points="808.5,1076.2 834.9,1070.6 835.2,1060.9 808.7,1066.6" fill="#a95325" stroke="#a95325"/>
<polygon points="684.4,1074.3 711.0,1078.6 710.5,1069.0 683.7,1064.7" fill="#9f4e23" stroke="#9f4e23"/>
<polygon points="475.0,904.4 488.8,925.4 478.9,904.4 466.2,882.7" fill="#c05e2a" stroke="#c05e2a"/>
<polygon points="781.7,1079.7 808.5,1076.2 808.7,1066.6 781.7,1070.1" fill="#a75225" stroke="#a75225"/>
<polygon points="754.7,1081.0 781.7,1079.7 781.7,1070.1 754.5,1071.4" fill="#a55124" stroke="#a55124"/>
<polygon points="924.1,1023.6 945.9,1009.0 946.9,999.0 925.0,1013.6" fill="#b25727" stroke="#b25727"/>
<polygon points="607.4,1008.5 643.0,1024.6 642.0,1014.7 606.3,998.4" fill="#a95325" stroke="#a95325"/>
<polygon points="607.4,1008.5 592.7,1031.8 591.4,1021.9 606.3,998.4" fill="#b15727" stroke="#b15727"/>
<polygon points="513.0,910.2 488.8,925.4 478.9,904.4 503.9,890.2" fill="#c9632c" stroke="#c9632c"/>
<polygon points="455.6,860.1 466.2,882.7 458.0,860.5 448.6,837.4" fill="#c4602b" stroke="#c4602b"/>
<polygon points="570.1,1018.3 592.7,1031.8 591.4,1021.9 568.6,1008.3" fill="#ae5526" stroke="#ae5526"/>
<polygon points="1029.8,811.5 1036.6,776.2 1036.2,779.2 1027.4,814.4" fill="#b95b29" stroke="#b95b29"/>
<polygon points="1045.1,861.4 1053.5,838.1 1050.4,842.2 1040.6,865.2" fill="#b95b29" stroke="#b95b29"/>
<polygon points="441.5,813.8 448.6,837.4 442.4,814.3 436.6,790.3" fill="#c8622c" stroke="#c8622c"/>
<polygon points="979.0,971.8 996.6,953.1 987.9,955.3 969.1,973.3" fill="#b65928" stroke="#b65928"/>
<polygon points="513.0,910.2 537.2,938.8 526.6,920.0 503.9,890.2" fill="#bc5c29" stroke="#bc5c29"/>
<polygon points="994.8,901.2 1019.7,915.5 1012.6,918.5 988.3,903.0" fill="#ce652d" stroke="#ce652d"/>
<polygon points="900.9,1036.5 924.1,1023.6 925.0,1013.6 901.7,1026.5" fill="#b15727" stroke="#b15727"/>
<polygon points="527.5,976.1 547.3,993.0 534.3,974.8 515.4,957.0" fill="#b65928" stroke="#b65928"/>
<polygon points="827.3,1034.7 864.8,1022.5 865.4,1012.5 827.6,1024.8" fill="#ac5426" stroke="#ac5426"/>
<polygon points="928.7,977.6 957.8,953.1 948.8,953.5 918.1,976.9" fill="#b45827" stroke="#b45827"/>
<polygon points="460.9,749.2 432.1,751.1 427.7,728.9 456.9,727.1" fill="#9e4e23" stroke="#9e4e23"/>
<polygon points="864.8,1022.5 876.6,1047.4 877.2,1037.5 865.4,1012.5" fill="#bc5c29" stroke="#bc5c29"/>
<polygon points="1029.8,811.5 1058.0,818.7 1055.4,822.8 1027.4,814.4" fill="#d2672e" stroke="#d2672e"/>
<polygon points="876.6,1047.4 900.9,1036.5 901.7,1026.5 877.2,1037.5" fill="#af5626" stroke="#af5626"/>
<polygon points="466.2,882.7 478.9,904.4 469.5,882.8 458.0,860.5" fill="#c25f2b" stroke="#c25f2b"/>
<polygon points="1034.4,883.9 1045.1,861.4 1040.6,865.2 1028.6,887.4" fill="#b95b29" stroke="#b95b29"/>
<polygon points="1004.7,936.0 1019.7,915.5 1012.6,918.5 996.4,938.5" fill="#b75a28" stroke="#b75a28"/>
<polygon points="714.3,1042.0 754.1,1044.2 753.9,1034.4 713.8,1032.2" fill="#a24f24" stroke="#a24f24"/>
<polygon points="448.6,837.4 458.0,860.5 450.4,837.8 442.4,814.3" fill="#c6612b" stroke="#c6612b"/>
<polygon points="547.3,993.0 568.6,1008.3 554.9,991.1 534.3,974.8" fill="#b35827" stroke="#b35827"/>
<polygon points="503.9,890.2 478.9,904.4 469.5,882.8 495.3,869.8" fill="#ca632c" stroke="#ca632c"/>
<polygon points="631.9,1049.7 657.4,1058.2 656.6,1048.4 630.9,1039.9" fill="#a35024" stroke="#a35024"/>
<polygon points="1050.4,842.2 1058.0,818.7 1055.4,822.8 1046.5,846.2" fill="#b95b29" stroke="#b95b29"/>
<polygon points="928.7,977.6 946.9,999.0 935.3,999.1 918.1,976.9" fill="#c9632c" stroke="#c9632c"/>
<polygon points="714.3,1042.0 710.5,1069.0 710.1,1059.2 713.8,1032.2" fill="#b25727" stroke="#b25727"/>
<polygon points="657.4,1058.2 683.7,1064.7 683.0,1054.9 656.6,1048.4" fill="#9f4e23" stroke="#9f4e23"/>
<polygon points="503.9,890.2 526.6,920.0 516.4,900.6 495.3,869.8" fill="#be5d2a" stroke="#be5d2a"/>
<polygon points="988.3,903.0 1008.2,871.7 1002.9,873.9 981.2,904.5" fill="#b85a28" stroke="#b85a28"/>
<polygon points="606.3,998.4 642.0,1014.7 628.1,1000.9 593.1,982.9" fill="#aa5325" stroke="#aa5325"/>
<polygon points="606.3,998.4 591.4,1021.9 577.0,1005.8 593.1,982.9" fill="#c5612b" stroke="#c5612b"/>
<polygon points="808.7,1066.6 835.2,1060.9 835.6,1051.1 808.9,1056.8" fill="#a95325" stroke="#a95325"/>
<polygon points="987.9,955.3 1004.7,936.0 996.4,938.5 978.4,957.1" fill="#b65928" stroke="#b65928"/>
<polygon points="683.7,1064.7 710.5,1069.0 710.1,1059.2 683.0,1054.9" fill="#9f4e23" stroke="#9f4e23"/>
<polygon points="568.6,1008.3 591.4,1021.9 577.0,1005.8 554.9,991.1" fill="#af5626" stroke="#af5626"/>
<polygon points="515.4,957.0 534.3,974.8 521.7,956.0 503.8,937.3" fill="#b85a28" stroke="#b85a28"/>
<polygon points="781.7,1070.1 808.7,1066.6 808.9,1056.8 781.7,1060.3" fill="#a75225" stroke="#a75225"/>
<polygon points="754.5,1071.4 781.7,1070.1 781.7,1060.3 754.3,1061.7" fill="#a55124" stroke="#a55124"/>
<polygon points="925.0,1013.6 946.9,999.0 935.3,999.1 912.5,1012.8" fill="#b25727" stroke="#b25727"/>
<polygon points="458.0,860.5 469.5,882.8 460.8,860.7 450.4,837.8" fill="#c3602b" stroke="#c3602b"/>
<polygon points="1040.6,865.2 1050.4,842.2 1046.5,846.2 1035.4,868.8" fill="#b95b29" stroke="#b95b29"/>
<polygon points="1036.2,779.2 1065.0,784.0 1068.6,762.2 1039.4,757.3" fill="#974a21" stroke="#974a21"/>
<polygon points="495.3,869.8 469.5,882.8 460.8,860.7 487.3,848.8" fill="#ca632c" stroke="#ca632c"/>
<polygon points="969.1,973.3 987.9,955.3 978.4,957.1 958.5,974.3" fill="#b55928" stroke="#b55928"/>
<polygon points="901.7,1026.5 925.0,1013.6 912.5,1012.8 888.3,1024.7" fill="#b05627" stroke="#b05627"/>
<polygon points="534.3,974.8 554.9,991.1 541.4,973.2 521.7,956.0" fill="#b55928" stroke="#b55928"/>
<polygon points="988.3,903.0 1012.6,918.5 1004.8,921.2 981.2,904.5" fill="#cd652d" stroke="#cd652d"/>
<polygon points="827.6,1024.8 865.4,1012.5 852.5,1009.0 813.9,1019.6" fill="#ac5426" stroke="#ac5426"/>
<polygon points="918.1,976.9 948.8,953.5 939.2,953.5 907.0,975.5" fill="#b35827" stroke="#b35827"/>
<polygon points="436.6,790.3 442.4,814.3 438.1,792.8 432.2,768.6" fill="#c8622c" stroke="#c8622c"/>
<polygon points="495.3,869.8 516.4,900.6 506.8,880.6 487.3,848.8" fill="#c05e2a" stroke="#c05e2a"/>
<polygon points="877.2,1037.5 901.7,1026.5 888.3,1024.7 863.1,1034.6" fill="#ae5526" stroke="#ae5526"/>
<polygon points="713.8,1032.2 753.9,1034.4 739.3,1025.8 699.2,1021.7" fill="#a14f23" stroke="#a14f23"/>
<polygon points="630.9,1039.9 656.6,1048.4 640.8,1035.4 615.5,1025.6" fill="#a45124" stroke="#a45124"/>
<polygon points="1027.4,814.4 1036.2,779.2 1039.4,757.3 1030.5,792.8" fill="#b95b29" stroke="#b95b29"/>
<polygon points="503.8,937.3 521.7,956.0 509.6,936.4 492.7,916.9" fill="#ba5b29" stroke="#ba5b29"/>
<polygon points="593.1,982.9 577.0,1005.8 562.8,988.9 580.2,966.7" fill="#c6612b" stroke="#c6612b"/>
<polygon points="996.4,938.5 1012.6,918.5 1004.8,921.2 987.4,940.5" fill="#b75928" stroke="#b75928"/>
<polygon points="554.9,991.1 577.0,1005.8 562.8,988.9 541.4,973.2" fill="#b15727" stroke="#b15727"/>
<polygon points="827.6,1024.8 835.6,1051.1 820.5,1046.3 813.9,1019.6" fill="#c6612b" stroke="#c6612b"/>
<polygon points="593.1,982.9 628.1,1000.9 614.3,986.3 580.2,966.7" fill="#ac5426" stroke="#ac5426"/>
<polygon points="1028.6,887.4 1040.6,865.2 1035.4,868.8 1022.1,890.6" fill="#b85a28" stroke="#b85a28"/>
<polygon points="713.8,1032.2 710.1,1059.2 693.9,1048.7 699.2,1021.7" fill="#c4602b" stroke="#c4602b"/>
<polygon points="656.6,1048.4 683.0,1054.9 667.0,1043.1 640.8,1035.4" fill="#a04f23" stroke="#a04f23"/>
<polygon points="918.1,976.9 935.3,999.1 923.1,998.6 907.0,975.5" fill="#c9622c" stroke="#c9622c"/>
<polygon points="683.0,1054.9 710.1,1059.2 693.9,1048.7 667.0,1043.1" fill="#9e4d23" stroke="#9e4d23"/>
<polygon points="442.4,814.3 450.4,837.8 446.2,816.6 438.1,792.8" fill="#c6612c" stroke="#c6612c"/>
<polygon points="808.9,1056.8 835.6,1051.1 820.5,1046.3 793.3,1050.8" fill="#a95325" stroke="#a95325"/>
<polygon points="781.7,1060.3 808.9,1056.8 793.3,1050.8 765.8,1053.1" fill="#a65225" stroke="#a65225"/>
<polygon points="981.2,904.5 1002.9,873.9 996.9,875.8 973.4,905.6" fill="#b75a28" stroke="#b75a28"/>
<polygon points="521.7,956.0 541.4,973.2 528.4,954.6 509.6,936.4" fill="#b75a28" stroke="#b75a28"/>
<polygon points="754.3,1061.7 781.7,1060.3 765.8,1053.1 738.2,1053.2" fill="#a45024" stroke="#a45024"/>
<polygon points="978.4,957.1 996.4,938.5 987.4,940.5 968.2,958.4" fill="#b55928" stroke="#b55928"/>
<polygon points="912.5,1012.8 935.3,999.1 923.1,998.6 899.3,1011.4" fill="#b15727" stroke="#b15727"/>
<polygon points="456.9,727.1 427.7,728.9 423.2,706.2 452.7,704.4" fill="#9e4e23" stroke="#9e4e23"/>
<polygon points="492.7,916.9 509.6,936.4 498.0,916.2 482.1,895.9" fill="#bc5c29" stroke="#bc5c29"/>
<polygon points="1046.5,846.2 1055.4,822.8 1058.9,801.3 1049.9,824.9" fill="#b95b29" stroke="#b95b29"/>
<polygon points="813.9,1019.6 852.5,1009.0 839.3,1004.8 799.8,1013.6" fill="#aa5425" stroke="#aa5425"/>
<polygon points="888.3,1024.7 912.5,1012.8 899.3,1011.4 874.4,1022.2" fill="#af5626" stroke="#af5626"/>
<polygon points="615.5,1025.6 640.8,1035.4 625.2,1021.5 600.3,1010.6" fill="#a75225" stroke="#a75225"/>
<polygon points="541.4,973.2 562.8,988.9 548.9,971.3 528.4,954.6" fill="#b35827" stroke="#b35827"/>
<polygon points="580.2,966.7 562.8,988.9 548.9,971.3 567.6,949.9" fill="#c6612b" stroke="#c6612b"/>
<polygon points="450.4,837.8 460.8,860.7 456.7,839.7 446.2,816.6" fill="#c4602b" stroke="#c4602b"/>
<polygon points="958.5,974.3 978.4,957.1 968.2,958.4 947.3,974.7" fill="#b45828" stroke="#b45828"/>
<polygon points="699.2,1021.7 739.3,1025.8 724.6,1016.4 684.5,1010.5" fill="#a04e23" stroke="#a04e23"/>
<polygon points="580.2,966.7 614.3,986.3 600.8,971.1 567.6,949.9" fill="#ae5526" stroke="#ae5526"/>
<polygon points="907.0,975.5 939.2,953.5 928.9,953.0 895.3,973.6" fill="#b25727" stroke="#b25727"/>
<polygon points="981.2,904.5 1004.8,921.2 996.2,923.4 973.4,905.6" fill="#cc642d" stroke="#cc642d"/>
<polygon points="863.1,1034.6 888.3,1024.7 874.4,1022.2 848.4,1031.0" fill="#ad5526" stroke="#ad5526"/>
<polygon points="487.3,848.8 460.8,860.7 456.7,839.7 483.6,827.6" fill="#a85225" stroke="#a85225"/>
<polygon points="640.8,1035.4 667.0,1043.1 651.1,1030.5 625.2,1021.5" fill="#a35024" stroke="#a35024"/>
<polygon points="699.2,1021.7 693.9,1048.7 677.7,1037.3 684.5,1010.5" fill="#c4602b" stroke="#c4602b"/>
<polygon points="813.9,1019.6 820.5,1046.3 805.0,1040.8 799.8,1013.6" fill="#c5612b" stroke="#c5612b"/>
<polygon points="509.6,936.4 528.4,954.6 515.8,935.3 498.0,916.2" fill="#b95b29" stroke="#b95b29"/>
<polygon points="667.0,1043.1 693.9,1048.7 677.7,1037.3 651.1,1030.5" fill="#9f4e23" stroke="#9f4e23"/>
<polygon points="1035.4,868.8 1046.5,846.2 1049.9,824.9 1038.6,847.8" fill="#b95b29" stroke="#b95b29"/>
<polygon points="987.4,940.5 1004.8,921.2 996.2,923.4 977.7,942.0" fill="#b65928" stroke="#b65928"/>
<polygon points="487.3,848.8 506.8,880.6 503.3,859.8 483.6,827.6" fill="#c15e2a" stroke="#c15e2a"/>
<polygon points="907.0,975.5 923.1,998.6 910.3,997.6 895.3,973.6" fill="#c8622c" stroke="#c8622c"/>
<polygon points="793.3,1050.8 820.5,1046.3 805.0,1040.8 777.4,1044.0" fill="#a75225" stroke="#a75225"/>
<polygon points="765.8,1053.1 793.3,1050.8 777.4,1044.0 749.7,1045.0" fill="#a55124" stroke="#a55124"/>
<polygon points="738.2,1053.2 765.8,1053.1 749.7,1045.0 722.0,1043.9" fill="#a35024" stroke="#a35024"/>
<polygon points="528.4,954.6 548.9,971.3 535.5,953.0 515.8,935.3" fill="#b55928" stroke="#b55928"/>
<polygon points="567.6,949.9 548.9,971.3 535.5,953.0 555.4,932.3" fill="#c6612c" stroke="#c6612c"/>
<polygon points="600.3,1010.6 625.2,1021.5 609.7,1006.8 585.4,994.7" fill="#a95325" stroke="#a95325"/>
<polygon points="968.2,958.4 987.4,940.5 977.7,942.0 957.3,959.1" fill="#b55928" stroke="#b55928"/>
<polygon points="899.3,1011.4 923.1,998.6 910.3,997.6 885.7,1009.3" fill="#b05627" stroke="#b05627"/>
<polygon points="567.6,949.9 600.8,971.1 587.4,955.1 555.4,932.3" fill="#b05627" stroke="#b05627"/>
<polygon points="1039.4,757.3 1068.6,762.2 1072.2,739.8 1042.7,734.8" fill="#974a21" stroke="#974a21"/>
<polygon points="1022.1,890.6 1035.4,868.8 1038.6,847.8 1025.2,869.8" fill="#b85a28" stroke="#b85a28"/>
<polygon points="684.5,1010.5 724.6,1016.4 709.8,1006.3 669.9,998.5" fill="#9e4e23" stroke="#9e4e23"/>
<polygon points="799.8,1013.6 839.3,1004.8 825.6,999.9 785.5,1006.9" fill="#a95325" stroke="#a95325"/>
<polygon points="432.2,768.6 438.1,792.8 433.6,770.7 427.7,746.3" fill="#c8622c" stroke="#c8622c"/>
<polygon points="996.9,875.8 1022.1,890.6 1025.2,869.8 999.7,854.9" fill="#a75225" stroke="#a75225"/>
<polygon points="625.2,1021.5 651.1,1030.5 635.2,1017.0 609.7,1006.8" fill="#a55124" stroke="#a55124"/>
<polygon points="874.4,1022.2 899.3,1011.4 885.7,1009.3 860.0,1019.0" fill="#ae5526" stroke="#ae5526"/>
<polygon points="684.5,1010.5 677.7,1037.3 661.6,1025.1 669.9,998.5" fill="#c4602b" stroke="#c4602b"/>
<polygon points="947.3,974.7 968.2,958.4 957.3,959.1 935.4,974.6" fill="#b35827" stroke="#b35827"/>
<polygon points="895.3,973.6 928.9,953.0 918.1,951.9 883.1,971.1" fill="#b15727" stroke="#b15727"/>
<polygon points="1030.5,792.8 1039.4,757.3 1042.7,734.8 1033.7,770.7" fill="#b95b29" stroke="#b95b29"/>
<polygon points="651.1,1030.5 677.7,1037.3 661.6,1025.1 635.2,1017.0" fill="#a14f23" stroke="#a14f23"/>
<polygon points="973.4,905.6 996.9,875.8 999.7,854.9 975.8,884.9" fill="#b75a28" stroke="#b75a28"/>
<polygon points="848.4,1031.0 874.4,1022.2 860.0,1019.0 833.4,1026.6" fill="#ac5426" stroke="#ac5426"/>
<polygon points="799.8,1013.6 805.0,1040.8 789.2,1034.4 785.5,1006.9" fill="#c5612b" stroke="#c5612b"/>
<polygon points="482.1,895.9 498.0,916.2 494.3,895.7 478.2,875.2" fill="#bd5d29" stroke="#bd5d29"/>
<polygon points="722.0,1043.9 749.7,1045.0 733.4,1036.2 705.6,1033.7" fill="#a14f23" stroke="#a14f23"/>
<polygon points="777.4,1044.0 805.0,1040.8 789.2,1034.4 761.3,1036.4" fill="#a65124" stroke="#a65124"/>
<polygon points="438.1,792.8 446.2,816.6 441.9,794.7 433.6,770.7" fill="#c6612c" stroke="#c6612c"/>
<polygon points="749.7,1045.0 777.4,1044.0 761.3,1036.4 733.4,1036.2" fill="#a45024" stroke="#a45024"/>
<polygon points="895.3,973.6 910.3,997.6 896.9,995.8 883.1,971.1" fill="#c8622c" stroke="#c8622c"/>
<polygon points="585.4,994.7 609.7,1006.8 594.5,991.3 570.7,978.1" fill="#ab5426" stroke="#ab5426"/>
<polygon points="498.0,916.2 515.8,935.3 512.4,915.0 494.3,895.7" fill="#ba5b29" stroke="#ba5b29"/>
<polygon points="669.9,998.5 709.8,1006.3 694.9,995.4 655.2,985.7" fill="#9e4e23" stroke="#9e4e23"/>
<polygon points="609.7,1006.8 635.2,1017.0 619.5,1002.7 594.5,991.3" fill="#a75225" stroke="#a75225"/>
<polygon points="885.7,1009.3 910.3,997.6 896.9,995.8 871.5,1006.4" fill="#af5626" stroke="#af5626"/>
<polygon points="785.5,1006.9 825.6,999.9 811.6,994.2 770.9,999.5" fill="#a85225" stroke="#a85225"/>
<polygon points="669.9,998.5 661.6,1025.1 645.5,1012.0 655.2,985.7" fill="#c4602b" stroke="#c4602b"/>
<polygon points="1049.9,824.9 1058.9,801.3 1062.5,779.3 1053.4,803.1" fill="#b95b29" stroke="#b95b29"/>
<polygon points="977.7,942.0 996.2,923.4 999.0,902.9 980.2,921.7" fill="#b65928" stroke="#b65928"/>
<polygon points="446.2,816.6 456.7,839.7 452.5,818.1 441.9,794.7" fill="#c4602b" stroke="#c4602b"/>
<polygon points="635.2,1017.0 661.6,1025.1 645.5,1012.0 619.5,1002.7" fill="#a35024" stroke="#a35024"/>
<polygon points="860.0,1019.0 885.7,1009.3 871.5,1006.4 845.1,1015.0" fill="#ad5526" stroke="#ad5526"/>
<polygon points="515.8,935.3 535.5,953.0 532.3,932.8 512.4,915.0" fill="#b65928" stroke="#b65928"/>
<polygon points="555.4,932.3 535.5,953.0 532.3,932.8 552.5,912.0" fill="#af5626" stroke="#af5626"/>
<polygon points="785.5,1006.9 789.2,1034.4 773.1,1027.3 770.9,999.5" fill="#c5612b" stroke="#c5612b"/>
<polygon points="555.4,932.3 587.4,955.1 584.9,935.0 552.5,912.0" fill="#b15727" stroke="#b15727"/>
<polygon points="483.6,827.6 456.7,839.7 452.5,818.1 479.7,805.9" fill="#a85225" stroke="#a85225"/>
<polygon points="833.4,1026.6 860.0,1019.0 845.1,1015.0 818.0,1021.5" fill="#ab5425" stroke="#ab5425"/>
<polygon points="957.3,959.1 977.7,942.0 980.2,921.7 959.6,939.0" fill="#b45828" stroke="#b45828"/>
<polygon points="705.6,1033.7 733.4,1036.2 717.0,1026.4 689.2,1022.7" fill="#a04e23" stroke="#a04e23"/>
<polygon points="1038.6,847.8 1049.9,824.9 1053.4,803.1 1042.0,826.3" fill="#b95b29" stroke="#b95b29"/>
<polygon points="733.4,1036.2 761.3,1036.4 745.0,1028.0 717.0,1026.4" fill="#a25024" stroke="#a25024"/>
<polygon points="761.3,1036.4 789.2,1034.4 773.1,1027.3 745.0,1028.0" fill="#a55124" stroke="#a55124"/>
<polygon points="483.6,827.6 503.3,859.8 499.6,838.4 479.7,805.9" fill="#c15e2a" stroke="#c15e2a"/>
<polygon points="918.1,951.9 935.4,974.6 937.4,954.7 919.8,931.7" fill="#b65928" stroke="#b65928"/>
<polygon points="883.1,971.1 918.1,951.9 919.8,931.7 884.4,951.1" fill="#b15727" stroke="#b15727"/>
<polygon points="935.4,974.6 957.3,959.1 959.6,939.0 937.4,954.7" fill="#b35827" stroke="#b35827"/>
<polygon points="1025.2,869.8 1038.6,847.8 1042.0,826.3 1028.3,848.5" fill="#b85a28" stroke="#b85a28"/>
<polygon points="570.7,978.1 594.5,991.3 592.0,971.6 568.0,958.2" fill="#ad5526" stroke="#ad5526"/>
<polygon points="999.7,854.9 1025.2,869.8 1028.3,848.5 1002.5,833.4" fill="#a75225" stroke="#a75225"/>
<polygon points="975.8,884.9 999.7,854.9 1002.5,833.4 978.3,863.7" fill="#b75a28" stroke="#b75a28"/>
<polygon points="655.2,985.7 694.9,995.4 693.7,975.7 653.6,966.0" fill="#9f4e23" stroke="#9f4e23"/>
<polygon points="594.5,991.3 619.5,1002.7 617.3,983.1 592.0,971.6" fill="#a95325" stroke="#a95325"/>
<polygon points="478.2,875.2 494.3,895.7 490.6,874.7 474.3,853.9" fill="#bd5d29" stroke="#bd5d29"/>
<polygon points="655.2,985.7 645.5,1012.0 643.7,992.5 653.6,966.0" fill="#b25727" stroke="#b25727"/>
<polygon points="770.9,999.5 811.6,994.2 812.0,974.5 770.7,979.9" fill="#a75225" stroke="#a75225"/>
<polygon points="871.5,1006.4 896.9,995.8 898.4,976.1 872.6,986.9" fill="#ae5526" stroke="#ae5526"/>
<polygon points="619.5,1002.7 645.5,1012.0 643.7,992.5 617.3,983.1" fill="#a55124" stroke="#a55124"/>
<polygon points="811.6,994.2 818.0,1021.5 818.4,1002.0 812.0,974.5" fill="#c15e2a" stroke="#c15e2a"/>
<polygon points="845.1,1015.0 871.5,1006.4 872.6,986.9 845.9,995.5" fill="#ac5426" stroke="#ac5426"/>
<polygon points="494.3,895.7 512.4,915.0 508.9,894.2 490.6,874.7" fill="#ba5b29" stroke="#ba5b29"/>
<polygon points="818.0,1021.5 845.1,1015.0 845.9,995.5 818.4,1002.0" fill="#aa5325" stroke="#aa5325"/>
<polygon points="689.2,1022.7 717.0,1026.4 716.1,1007.1 688.0,1003.3" fill="#9f4e23" stroke="#9f4e23"/>
<polygon points="717.0,1026.4 745.0,1028.0 744.5,1008.6 716.1,1007.1" fill="#a24f24" stroke="#a24f24"/>
<polygon points="745.0,1028.0 773.1,1027.3 773.0,1007.9 744.5,1008.6" fill="#a45024" stroke="#a45024"/>
<polygon points="980.2,921.7 999.0,902.9 1001.8,882.0 982.8,900.9" fill="#b65928" stroke="#b65928"/>
<polygon points="512.4,915.0 532.3,932.8 529.0,912.2 508.9,894.2" fill="#b65928" stroke="#b65928"/>
<polygon points="552.5,912.0 532.3,932.8 529.0,912.2 549.5,891.1" fill="#af5626" stroke="#af5626"/>
<polygon points="552.5,912.0 584.9,935.0 582.3,914.3 549.5,891.1" fill="#b15727" stroke="#b15727"/>
<polygon points="959.6,939.0 980.2,921.7 982.8,900.9 961.9,918.4" fill="#b45828" stroke="#b45828"/>
<polygon points="919.8,931.7 937.4,954.7 939.4,934.2 921.6,911.0" fill="#b65928" stroke="#b65928"/>
<polygon points="884.4,951.1 919.8,931.7 921.6,911.0 885.8,930.6" fill="#b15727" stroke="#b15727"/>
<polygon points="937.4,954.7 959.6,939.0 961.9,918.4 939.4,934.2" fill="#b35827" stroke="#b35827"/>
<polygon points="568.0,958.2 592.0,971.6 589.5,951.4 565.2,937.9" fill="#ad5526" stroke="#ad5526"/>
<polygon points="653.6,966.0 693.7,975.7 692.6,955.5 651.9,945.7" fill="#9f4e23" stroke="#9f4e23"/>
<polygon points="592.0,971.6 617.3,983.1 615.2,963.0 589.5,951.4" fill="#a95325" stroke="#a95325"/>
<polygon points="653.6,966.0 643.7,992.5 641.9,972.5 651.9,945.7" fill="#b25727" stroke="#b25727"/>
<polygon points="770.7,979.9 812.0,974.5 812.3,954.3 770.6,959.7" fill="#a75225" stroke="#a75225"/>
<polygon points="872.6,986.9 898.4,976.1 899.9,955.9 873.8,966.8" fill="#ae5526" stroke="#ae5526"/>
<polygon points="617.3,983.1 643.7,992.5 641.9,972.5 615.2,963.0" fill="#a55124" stroke="#a55124"/>
<polygon points="812.0,974.5 818.4,1002.0 818.9,982.1 812.3,954.3" fill="#c15e2a" stroke="#c15e2a"/>
<polygon points="845.9,995.5 872.6,986.9 873.8,966.8 846.7,975.5" fill="#ac5426" stroke="#ac5426"/>
<polygon points="818.4,1002.0 845.9,995.5 846.7,975.5 818.9,982.1" fill="#aa5325" stroke="#aa5325"/>
<polygon points="688.0,1003.3 716.1,1007.1 715.2,987.2 686.7,983.4" fill="#9f4e23" stroke="#9f4e23"/>
<polygon points="716.1,1007.1 744.5,1008.6 744.0,988.8 715.2,987.2" fill="#a24f24" stroke="#a24f24"/>
<polygon points="744.5,1008.6 773.0,1007.9 772.8,988.1 744.0,988.8" fill="#a45024" stroke="#a45024"/>
</g>
<path d="M938.6,490.4 L922.9,479.5 L906.5,469.7 L921.7,448.8 L904.2,439.7 L886.2,431.7 L867.7,424.6 L848.7,418.6 L840.0,442.1 L821.0,437.2 L801.7,433.5 L806.8,409.3 L786.9,406.7 L767.0,405.2 L746.9,404.8 L726.9,405.5 L728.8,430.0 L709.2,431.8 L689.8,434.8 L684.1,410.7 L664.6,414.8 L645.4,420.0 L626.5,426.2 L608.1,433.5 L620.5,455.7 L603.0,463.9 L586.1,473.1 L570.4,452.6 L553.9,462.9 L538.1,474.2 L523.1,486.4 L508.9,499.3 L530.1,515.8 L517.2,529.4 L505.3,543.7 L481.5,529.9 L470.4,545.2 L460.4,561.1 L451.4,577.6 L443.6,594.5 L471.0,602.7 L464.6,619.8 L459.6,637.3 L431.0,632.5 L427.1,650.7 L424.5,669.1 L423.1,687.6 L423.2,706.2 L452.7,704.4 L454.1,722.6 L457.0,740.8 L427.7,746.3 L431.9,764.7 L437.5,782.8 L444.3,800.6 L452.5,818.1 L479.7,805.9 L489.0,822.4 L499.6,838.4 L474.3,853.9 L486.3,869.6 L499.5,884.6 L513.7,898.8 L529.0,912.2 L549.5,891.1 L565.4,903.3 L582.3,914.3 L565.2,937.9 L583.3,948.2 L602.2,957.4 L621.7,965.5 L641.9,972.5 L651.9,945.7 L672.0,951.2 L692.6,955.5 L686.7,983.4 L708.1,986.5 L729.6,988.3 L751.2,988.8 L772.8,988.1 L770.6,959.7 L791.6,957.7 L812.3,954.3 L818.9,982.1 L839.9,977.4 L860.4,971.4 L880.4,964.2 L899.9,955.9 L885.8,930.6 L904.1,921.4 L921.6,911.0 L939.4,934.2 L956.4,922.5 L972.6,909.9 L987.7,896.3 L1001.8,882.0 L978.3,863.7 L991.0,848.9 L1002.5,833.4 L1028.3,848.5 L1038.7,831.9 L1047.9,814.8 L1055.9,797.2 L1062.5,779.3 L1033.7,770.7 L1038.9,752.9 L1042.7,734.8 L1072.2,739.8 L1074.6,721.1 L1075.7,702.5 L1075.4,683.8 L1073.9,665.2 L1044.5,667.1 L1041.7,649.1 L1037.5,631.3 L1066.0,625.9 L1060.4,608.2 L1053.5,590.8 L1045.4,573.9 L1036.2,557.5 L1010.6,568.9 L1000.5,553.4 L989.2,538.6 L1012.7,524.2 L1000.1,509.9 L986.6,496.3 L972.3,483.5 L957.0,471.5Z M976.8,536.5 L965.0,523.7 L952.4,511.7 L938.9,500.5 L924.7,490.1 L909.8,480.5 L894.3,471.8 L878.2,464.0 L861.6,457.1 L844.5,451.2 L827.1,446.3 L809.4,442.4 L791.5,439.5 L773.3,437.6 L755.1,436.8 L736.9,437.0 L718.7,438.2 L700.7,440.4 L682.8,443.7 L665.2,448.0 L648.0,453.2 L631.1,459.5 L614.6,466.6 L598.8,474.7 L583.5,483.7 L568.8,493.6 L554.9,504.3 L541.7,515.8 L529.4,528.0 L517.9,541.0 L507.4,554.6 L497.9,568.8 L489.4,583.5 L481.9,598.7 L475.6,614.4 L470.4,630.4 L466.3,646.7 L463.4,663.3 L461.8,680.0 L461.4,696.9 L462.2,713.7 L464.2,730.5 L467.5,747.2 L472.0,763.7 L477.7,779.9 L484.6,795.8 L492.8,811.3 L502.0,826.3 L512.4,840.7 L523.8,854.5 L536.3,867.6 L549.7,880.0 L564.1,891.6 L579.3,902.2 L595.3,912.0 L612.0,920.8 L629.4,928.5 L647.3,935.2 L665.7,940.8 L684.5,945.3 L703.6,948.7 L723.0,950.8 L742.4,951.8 L761.9,951.7 L781.3,950.3 L800.6,947.8 L819.6,944.1 L838.3,939.3 L856.6,933.4 L874.4,926.3 L891.6,918.3 L908.1,909.2 L923.9,899.1 L938.9,888.2 L953.0,876.4 L966.2,863.8 L978.4,850.4 L989.5,836.4 L999.6,821.7 L1008.5,806.6 L1016.2,790.9 L1022.8,774.9 L1028.2,758.5 L1032.3,741.9 L1035.2,725.2 L1036.8,708.3 L1037.2,691.4 L1036.4,674.6 L1034.3,657.8 L1031.1,641.3 L1026.6,625.0 L1021.0,609.1 L1014.3,593.6 L1006.5,578.5 L997.6,563.9 L987.7,549.9Z" fill="url(#redstripe)" fill-rule="evenodd" stroke="#ee8426" stroke-width="1.15" stroke-linejoin="miter"/>
<path d="M938.9,492.5 L922.0,480.7 L904.2,470.1 L919.4,449.2 L902.7,440.6 L885.5,433.0 L867.9,426.2 L849.8,420.5 L841.1,443.9 L820.6,438.6 L799.8,434.7 L804.9,410.5 L785.9,408.0 L766.9,406.6 L747.8,406.2 L728.6,406.8 L730.6,431.3 L709.4,433.2 L688.5,436.5 L682.8,412.4 L664.2,416.4 L645.9,421.3 L627.9,427.3 L610.4,434.2 L622.7,456.3 L603.8,465.1 L585.6,475.1 L569.9,454.6 L554.2,464.5 L539.2,475.3 L524.8,486.9 L511.3,499.2 L532.5,515.7 L518.5,530.3 L505.7,545.8 L482.0,531.9 L471.4,546.5 L461.9,561.7 L453.3,577.4 L445.8,593.6 L473.2,601.8 L466.3,620.2 L460.9,639.1 L432.3,634.3 L428.6,651.6 L426.2,669.2 L424.9,686.8 L424.8,704.6 L454.4,702.7 L455.9,722.4 L459.0,742.0 L429.7,747.5 L433.8,765.0 L439.1,782.3 L445.7,799.3 L453.4,815.9 L480.6,803.8 L490.6,821.6 L502.1,838.8 L476.7,854.3 L488.2,869.3 L500.8,883.5 L514.4,897.1 L528.9,909.9 L549.4,888.9 L566.5,902.0 L584.8,913.9 L567.7,937.4 L585.0,947.1 L603.0,955.9 L621.6,963.7 L640.8,970.4 L650.8,943.6 L672.5,949.6 L694.6,954.1 L688.8,982.0 L709.2,984.9 L729.7,986.6 L750.3,987.1 L770.9,986.5 L768.7,958.1 L791.3,956.0 L813.7,952.4 L820.3,980.1 L840.2,975.5 L859.8,969.8 L878.9,963.0 L897.5,955.2 L883.4,929.9 L903.2,920.0 L922.0,908.8 L939.8,932.0 L956.0,920.7 L971.3,908.7 L985.8,895.8 L999.3,882.1 L975.8,863.9 L989.6,848.0 L1001.9,831.2 L1027.7,846.2 L1037.6,830.4 L1046.3,814.1 L1053.9,797.4 L1060.3,780.3 L1031.6,771.7 L1037.2,752.5 L1041.3,733.0 L1070.7,737.9 L1073.0,720.2 L1074.0,702.4 L1073.8,684.6 L1072.3,666.9 L1042.9,668.7 L1040.0,649.3 L1035.4,630.2 L1063.9,624.8 L1058.5,607.9 L1051.9,591.3 L1044.3,575.1 L1035.5,559.5 L1009.9,570.9 L999.0,554.2 L986.9,538.2 L1010.3,523.9 L998.3,510.2 L985.4,497.2 L971.7,485.0 L957.2,473.6Z M978.1,535.6 L966.3,522.8 L953.6,510.7 L940.0,499.4 L925.7,488.9 L910.8,479.3 L895.1,470.5 L878.9,462.7 L862.2,455.8 L845.1,449.9 L827.6,444.9 L809.7,441.0 L791.7,438.1 L773.5,436.2 L755.2,435.4 L736.9,435.5 L718.6,436.8 L700.4,439.0 L682.4,442.3 L664.7,446.6 L647.4,451.9 L630.4,458.1 L613.9,465.4 L597.9,473.5 L582.5,482.6 L567.8,492.5 L553.7,503.3 L540.5,514.8 L528.1,527.1 L516.6,540.1 L506.0,553.8 L496.4,568.1 L487.8,582.9 L480.3,598.2 L473.9,614.0 L468.7,630.1 L464.6,646.5 L461.7,663.2 L460.1,680.0 L459.6,696.9 L460.4,713.9 L462.5,730.8 L465.8,747.6 L470.3,764.2 L476.1,780.5 L483.0,796.5 L491.2,812.1 L500.5,827.1 L510.9,841.7 L522.4,855.6 L535.0,868.8 L548.5,881.2 L562.9,892.8 L578.3,903.6 L594.4,913.4 L611.2,922.2 L628.7,930.0 L646.7,936.8 L665.2,942.4 L684.1,946.9 L703.3,950.3 L722.8,952.5 L742.4,953.5 L762.0,953.3 L781.5,952.0 L800.9,949.4 L820.1,945.7 L838.9,940.9 L857.3,934.9 L875.2,927.8 L892.5,919.7 L909.1,910.6 L925.0,900.5 L940.1,889.4 L954.3,877.5 L967.5,864.9 L979.8,851.4 L991.0,837.3 L1001.1,822.6 L1010.1,807.3 L1017.9,791.6 L1024.5,775.4 L1029.8,759.0 L1034.0,742.3 L1036.9,725.4 L1038.6,708.4 L1039.0,691.4 L1038.1,674.5 L1036.0,657.7 L1032.8,641.1 L1028.3,624.7 L1022.6,608.7 L1015.9,593.0 L1008.0,577.8 L999.0,563.1 L989.1,549.1Z" fill="none" stroke="#ecd83a" stroke-width="0.9" stroke-linejoin="miter"/>
<g font-family='"Noto Sans CJK SC","DejaVu Sans Condensed","Liberation Sans",sans-serif' font-size="13.5" fill="#ffffff">
<rect x="1408.5" y="147" width="12.4" height="1299" fill="#ffffff"/>
<rect x="1412.2" y="147" width="5" height="1299" fill="#ea8242"/>
<polygon points="1424.5,152.8 1414.7,158.5 1404.9,152.8 1404.9,141.5 1414.7,135.9 1424.5,141.5" fill="#ea8242" stroke="#ffffff" stroke-width="1.8"/>
<path d="M1409,147.2 h11.4 M1414.7,141.500 v11.4" stroke="#ffffff" stroke-width="1.6"/>
<polygon points="1424.5,1452.0 1414.7,1457.6 1404.9,1452.0 1404.9,1440.6 1414.7,1435.0 1424.5,1440.6" fill="#ea8242" stroke="#ffffff" stroke-width="1.8"/>
<path d="M1348,106 h42 a2,2 0 0 1 2,2 v31 l10,8.500 h-54 a2,2 0 0 1 -2,-2 v-37.500 a2,2 0 0 1 2,-2z" fill="#666666"/>
<text x="1351" y="123.300">65.00</text><text x="1351" y="141.800">(325)</text>
<path d="M1355.300,1405.300 h34.700 a2,2 0 0 1 2,2 v30 l10,8.500 h-46.700 a2,2 0 0 1 -2,-2 v-36.500 a2,2 0 0 1 2,-2z" fill="#666666"/>
<text x="1358" y="1422.200">0.20</text><text x="1358" y="1440.700">(1)</text>
<g transform="translate(1414.500 1492)"><path d="M-5,-1 v-4.500 a4.200,4.200 0 0 1 8.400,0 v1" fill="none" stroke="#ec6b21" stroke-width="2.2"/><rect x="-8" y="-1" width="16" height="10.500" rx="1.500" fill="#ec6b21"/><path d="M-1,2 h4 l-1,2 l1.500,2.500 h-4.500z" fill="#8a8a8a"/></g>
<g transform="translate(1414.500 1519.700)"><circle r="8" fill="none" stroke="#ffffff" stroke-width="3.400" stroke-dasharray="3.600 2.700"/><circle r="7" fill="none" stroke="#ffffff" stroke-width="2.200"/><circle r="4.300" fill="none" stroke="#ec6b21" stroke-width="1.600"/></g>
<rect x="383" y="1514.800" width="700" height="10.400" rx="5.200" fill="#ffffff"/>
<rect x="386" y="1517.500" width="696" height="5" rx="2.500" fill="#ea8242"/>
<polygon points="1093.9,1520.0 1088.2,1529.8 1076.9,1529.8 1071.3,1520.0 1076.9,1510.2 1088.2,1510.2" fill="#ea8242" stroke="#ffffff" stroke-width="1.800"/>
<path d="M1108,1498 h53.500 a2,2 0 0 1 2,2 v18.500 a2,2 0 0 1 -2,2 h-65 l9.500,-9 v-11.500 a2,2 0 0 1 2,-2z" fill="#666666"/>
<text x="1111" y="1515.200">503101</text>
<rect x="883.500" y="1422.200" width="449.500" height="71.500" rx="3" fill="#343434"/>
<text x="901" y="1441.300" textLength="297" lengthAdjust="spacingAndGlyphs">tire_0.4n_0.2mm_FLEX_MK4IS_6h38m.bgcode →</text>
<text x="901" y="1459.200">192.168.8.235</text>
<rect x="901" y="1465.800" width="324.500" height="3" fill="#5c5c5c"/><rect x="901" y="1465.800" width="227.500" height="3" fill="#f0560f"/>
<text x="901" y="1485.200">70% - 3.42 of 4.89MB uploaded</text>
<rect x="1291.800" y="1441.800" width="31" height="31" rx="4.500" fill="none" stroke="#ec6b21" stroke-width="1.600"/><rect x="1299.400" y="1449.400" width="16" height="16" fill="#ec6b21"/>
<rect x="0" y="1468" width="69" height="74" fill="#424242"/>
<path d="M69,1468 h64 a4,4 0 0 1 4,4 v70 h-68z" fill="#222222"/>
<g fill="none" stroke="#ffffff" stroke-width="1.500" stroke-linejoin="round"><path d="M13,1495 h34 v33 h-34z M13,1495 l12,-13 h34 l-12,13 M47,1528 l12,-13 v-33"/></g>
<g fill="none" stroke="#ffffff" stroke-width="1.300" stroke-linejoin="round"><path d="M77,1528.0 h34 l12,-12.500 M77,1524.5 h34 l12,-12.500 M77,1521.0 h34 l12,-12.500 M77,1517.5 h34 l12,-12.500 M77,1514.0 h34 l12,-12.500 M77,1510.5 h34 l12,-12.500 M77,1507.0 h34 l12,-12.500 M77,1503.5 h34 l12,-12.500 M77,1500.0 h34 l12,-12.500 M77,1496.5 h34 l12,-12.500"/><path d="M77,1495.500 l12,-13 h34 l-12,13z" fill="#222222"/></g>
</g>
</svg>
<div class="legend">
<div class="hdr"></div>
<svg class="abs" style="left:6px;top:5px" width="14" height="13" viewBox="0 0 14 13"><polygon points="1,1.5 13,1.5 7,12" fill="#ffffff"/></svg>
<span class="t ui" style="left:26px;top:3px">Legend</span>
<div class="abs" style="left:7px;top:32px;width:411px;height:24px;background:#252525"></div>
<div class="abs" style="left:394px;top:32px;width:24px;height:24px;background:#b05c2d"></div>
<svg class="abs" style="left:399px;top:38px" width="14" height="12" viewBox="0 0 14 12"><polygon points="1,1 13,1 7,11" fill="#ffffff"/></svg>
<span class="t ui" style="left:11px;top:34.5px">Feature type</span>
<span class="t ui" style="left:158px;top:59.599999999999994px">Time</span>
<span class="t ui" style="left:210px;top:59.599999999999994px">Percentage</span>
<span class="t ui" style="left:300px;top:59.599999999999994px">Used filament</span>
<div class="oline" style="top:82px"></div>
<div class="sw" style="top:87.19999999999999px;background:#ffe64d"></div>
<span class="t ui" style="left:33px;top:85.19999999999999px">Perimeter</span>
<span class="t ui" style="left:158px;top:85.19999999999999px">1h36m</span>
<div class="bar" style="top:87.69999999999999px;width:28px"></div>
<span class="t ui" style="left:254px;top:85.19999999999999px">24.2%</span>
<span class="t ui" style="left:300px;top:85.19999999999999px">14.11 m</span>
<span class="t ui" style="left:358px;top:85.19999999999999px">40.40 g</span>
<div class="sw" style="top:109.19999999999999px;background:#ff7d38"></div>
<span class="t ui" style="left:33px;top:107.19999999999999px">External perimeter</span>
<span class="t ui" style="left:158px;top:107.19999999999999px">1h37m</span>
<div class="bar" style="top:109.69999999999999px;width:28px"></div>
<span class="t ui" style="left:254px;top:107.19999999999999px">24.3%</span>
<span class="t ui" style="left:300px;top:107.19999999999999px">14.19 m</span>
<span class="t ui" style="left:358px;top:107.19999999999999px">40.62 g</span>
<div class="sw" style="top:131.2px;background:#b03029"></div>
<span class="t ui" style="left:33px;top:129.2px">Internal infill</span>
<span class="t ui" style="left:158px;top:129.2px">2h7m</span>
<div class="bar" style="top:131.7px;width:37px"></div>
<span class="t ui" style="left:254px;top:129.2px">31.8%</span>
<span class="t ui" style="left:300px;top:129.2px">16.49 m</span>
<span class="t ui" style="left:358px;top:129.2px">47.18 g</span>
<div class="sw" style="top:153.2px;background:#9654cc"></div>
<span class="t ui" style="left:33px;top:151.2px">Solid infill</span>
<span class="t ui" style="left:158px;top:151.2px">17m</span>
<div class="bar" style="top:153.7px;width:5px"></div>
<span class="t ui" style="left:254px;top:151.2px">4.3%</span>
<span class="t ui" style="left:300px;top:151.2px">2.16 m</span>
<span class="t ui" style="left:358px;top:151.2px">6.18 g</span>
<div class="sw" style="top:175.2px;background:#f04040"></div>
<span class="t ui" style="left:33px;top:173.2px">Top solid infill</span>
<span class="t ui" style="left:158px;top:173.2px">2m</span>
<div class="bar" style="top:175.7px;width:1px"></div>
<span class="t ui" style="left:254px;top:173.2px">0.6%</span>
<span class="t ui" style="left:300px;top:173.2px">0.25 m</span>
<span class="t ui" style="left:358px;top:173.2px">0.73 g</span>
<div class="sw" style="top:197.2px;background:#4d80ba"></div>
<span class="t ui" style="left:33px;top:195.2px">Bridge infill</span>
<span class="t ui" style="left:158px;top:195.2px">3m</span>
<div class="bar" style="top:197.7px;width:1px"></div>
<span class="t ui" style="left:254px;top:195.2px">0.7%</span>
<span class="t ui" style="left:300px;top:195.2px">0.35 m</span>
<span class="t ui" style="left:358px;top:195.2px">1.00 g</span>
<div class="sw" style="top:219.2px;background:#5ed194"></div>
<span class="t ui" style="left:33px;top:217.2px">Custom</span>
<span class="t ui" style="left:158px;top:217.2px">5s</span>
<div class="bar" style="top:219.7px;width:1px"></div>
<span class="t ui" style="left:254px;top:217.2px">0.0%</span>
<span class="t ui" style="left:300px;top:217.2px">0.02 m</span>
<span class="t ui" style="left:358px;top:217.2px">0.05 g</span>
<span class="t ui" style="left:7px;top:244px">Estimated printing times [Normal mode]:</span>
<div class="oline" style="top:266px"></div>
<span class="t o ui" style="left:7px;top:272px">First layer:</span>
<span class="t ui" style="left:80px;top:272px">4m</span>
<span class="t o ui" style="left:7px;top:294px">Total:</span>
<span class="t ui" style="left:80px;top:294px">6h38m</span>
<div class="abs" style="left:7px;top:318.5px;width:127px;height:23px;background:#b05c2d"></div>
<span class="t ui" style="left:11px;top:320.5px">Show stealth mode</span>
<div class="oline" style="top:350px"></div>
<svg class="abs" style="left:0;top:0" width="427" height="403" viewBox="0 0 427 403"><g transform="translate(20.5 376)"><path d="M-8,10.600 H7.300 a2.150,2.150 0 0 0 0,-4.300 H2.400 a2.250,2.250 0 0 1 0,-4.500 H9.500 a2.050,2.050 0 0 0 0,-4.100 H2" fill="none" stroke="#ffffff" stroke-width="1.100" stroke-dasharray="1.500 0.900"/><path d="M-11.900,2.200 a4.400,4.400 0 1 1 8.800,0 c0,3 -4.400,8.300 -4.400,8.300 s-4.400,-5.300 -4.400,-8.300z" fill="none" stroke="#ed6b21" stroke-width="1.100"/><circle cx="-7.500" cy="2" r="1.300" fill="#ed6b21"/><path d="M5.600,-9.200 a3.200,3.200 0 1 1 6.400,0 c0,2.200 -3.200,5.600 -3.200,5.600 s-3.200,-3.400 -3.200,-5.600z" fill="none" stroke="#ed6b21" stroke-width="1"/><circle cx="8.800" cy="-9.300" r="0.900" fill="#ed6b21"/></g><g transform="translate(55.5 376)"><path d="M-13,-6 c1,-5 7,-6.500 11,-5.500 c3,-2.500 9,-1.500 10.500,2 c4,1 5.500,5.500 4,9 c0.500,5 -3,9 -8,9.500 c-5,2 -10,1.500 -13.500,0.500 c-4.500,-1 -5,-4.500 -4.500,-7.500 c-0.500,-3 -0.500,-6 0.500,-8z" fill="#ffffff"/><path d="M-2.500,11.500 c-1.500,-2 -2.200,-5 -3.300,-7.300 l-1.700,-3.700 c-0.400,-1.300 1,-2 1.900,-1 l2.100,3 v-8.800 c0,-1.300 1.900,-1.300 1.900,0 v5.300 h0.500 v-7 c0,-1.300 1.900,-1.300 1.900,0 v7 h0.500 v-6.200 c0,-1.300 1.900,-1.300 1.900,0 v6.700 h0.500 v-4.200 c0,-1.200 1.800,-1.200 1.800,0 v9 c0,3.500 -1.300,5.800 -2.300,7.200z" fill="#ed6b21"/></g><g transform="translate(90.5 376)"><polyline points="-7.900,-3.8 0,-12.3 7.900,-3.8" fill="none" stroke="#ed6b21" stroke-width="1.400"/><polyline points="-7.900,2.3 0,-6.2 7.900,2.3" fill="none" stroke="#ed6b21" stroke-width="1.400"/><polyline points="-7.900,8.4 0,-0.1 7.900,8.4" fill="none" stroke="#ed6b21" stroke-width="1.400"/><rect x="-10.700" y="9.200" width="21.400" height="2.600" fill="#d531d5"/></g><g transform="translate(125.5 376)"><polyline points="-7.900,-12.5 0,-4.0 7.900,-12.5" fill="none" stroke="#ed6b21" stroke-width="1.400"/><polyline points="-7.900,-6.4 0,2.1 7.900,-6.4" fill="none" stroke="#ed6b21" stroke-width="1.400"/><polyline points="-7.900,-0.3 0,8.2 7.900,-0.3" fill="none" stroke="#ed6b21" stroke-width="1.400"/><rect x="-10.700" y="9.200" width="21.400" height="2.600" fill="#3aa7d8"/></g><g transform="translate(160.5 376)"><g transform="rotate(-40)" fill="none" stroke="#ffffff" stroke-width="1.900" stroke-linecap="round"><path d="M-2.200,-3.300 H-7 a3.300,3.300 0 0 0 0,6.600 H-2.200"/><path d="M2.200,-3.300 H7 a3.300,3.300 0 0 1 0,6.600 H2.200"/></g><g stroke="#ffffff" stroke-width="1.500" stroke-linecap="round"><path d="M-6.500,-9.500 l1,2.300 M-9.300,-6.200 l2.300,1 M-2.800,-10.300 l0.200,2.400 M5.700,7.300 l-1,-2.300 M8.500,4 l-2.300,-1 M2,8.100 l-0.200,-2.400"/></g><rect x="-10.700" y="9.200" width="21.400" height="2.600" fill="#f0f0f0"/></g><g transform="translate(195.5 376)"><path d="M-8.400,-12.500 h5.900 v7.500 h1.700 v3.300 h-9.800 v-3.300 h2.200z" fill="#ffffff"/><path d="M-5.500,-1.700 c0.300,4.500 3,7 6.500,7.300" fill="none" stroke="#ffffff" stroke-width="1.200"/><circle cx="1.300" cy="5.800" r="1.100" fill="#ffffff"/><path d="M2,-8.500 h6.500 v9 h2.300 l-5.600,6.500 l-5.600,-6.500 h2.400z" fill="#ed6b21"/><rect x="-10.700" y="9.200" width="21.400" height="2.600" fill="#c9c052"/></g><g transform="translate(230.5 376)"><g transform="translate(0 0.9)"><circle cx="0.300" cy="-7.200" r="5.700" fill="#2eaaf5"/><circle cx="-4.500" cy="1.600" r="5.700" fill="#f23d8f"/><circle cx="5.100" cy="1.600" r="5.700" fill="#fbc936"/><path d="M-4.300,-4 a5.700,5.700 0 0 1 4.900,2.400 a5.700,5.700 0 0 1 -2.800,-6 z" fill="#2a6fb8" opacity="0.8"/><path d="M0.300,-1.500 a5.700,5.700 0 0 1 0,6.200 a5.700,5.700 0 0 1 0,-6.200z" fill="#f47a5a"/><path d="M0.300,-1.600 l-2.200,-2.300 a5.700,5.700 0 0 0 4.600,-0.100 z" fill="#143f7a"/></g><rect x="-10.700" y="9.200" width="21.400" height="2.600" fill="#e8958c"/></g><g transform="translate(265.5 376)"><path d="M-6.400,-10.700 h13 M-6.400,6.200 h13" stroke="#ffffff" stroke-width="1.600" fill="none"/><path d="M-4.800,-10.500 c0,5.500 3.700,6 3.700,8.300 c0,2.200 -3.700,2.800 -3.700,8.300 M5,-10.500 c0,5.500 -3.700,6 -3.700,8.300 c0,2.200 3.700,2.800 3.700,8.300" stroke="#ffffff" stroke-width="1.300" fill="none"/><path d="M-3,5.300 c0.600,-2.200 2,-2.500 3.100,-2.900 c1.100,0.400 2.500,0.700 3.100,2.900z" fill="#ed6b21"/><path d="M-2,-5 h4.200 l-2.100,2.200z" fill="#ed6b21"/><rect x="-10.700" y="9.200" width="21.400" height="2.600" fill="#3cd651"/></g><g transform="translate(300.5 376)"><g><circle cx="-1.400" cy="-5.200" r="6" fill="none" stroke="#ed6b21" stroke-width="3.400" stroke-dasharray="2.900 1.810"/><circle cx="-1.400" cy="-5.200" r="4.400" fill="none" stroke="#ed6b21" stroke-width="3.200"/><path d="M-1.400,-5.200 L12,-5.200 L12,12 L-8,12 z" fill="#5c5c5c" transform="rotate(-3 -1.400 -5.200)"/></g><path d="M-3.800,6.800 l1.400,-4.600 l9.300,-9.300 l3.300,3.300 l-9.300,9.300z" fill="#ffffff"/><path d="M8,-8.200 l1.400,-1.400 l3.300,3.300 l-1.400,1.400z" fill="#ffffff"/><rect x="-10.700" y="9.200" width="21.400" height="2.600" fill="#e6c629"/></g><g transform="translate(335.5 376)"><circle cx="0.200" cy="-0.600" r="11.800" fill="#ffffff"/><path d="M0.200,-0.600 v-11.800 a11.800,11.800 0 0 1 11.800,11.800z M0.200,-0.600 v11.800 a11.800,11.800 0 0 1 -11.800,-11.800z" fill="#000000"/></g><g transform="translate(370.5 376)"><g transform="translate(0.600 -0.600)" fill="none" stroke="#ffffff" stroke-width="1.300" stroke-linejoin="round"><polygon points="0,-13.300 11.600,-6.600 11.600,6.600 0,13.300 -11.600,6.600 -11.600,-6.600"/><polyline points="-11.600,-6.600 0,0 11.600,-6.600"/><line x1="0" y1="0" x2="0" y2="13.300"/><g stroke-width="0.800" stroke-dasharray="2 1.500"><line x1="0" y1="-13.300" x2="0" y2="0"/><line x1="0" y1="0" x2="-11.600" y2="6.600"/><line x1="0" y1="0" x2="11.600" y2="6.600"/></g></g></g><g transform="translate(405.5 376)"><rect x="-13.400" y="-13.800" width="26.700" height="26.700" fill="none" stroke="#ed8546" stroke-width="1.200"/><path d="M-4.100,-13.200 h8.400 v15.900 h2.800 v5.100 h-3.600 l-3.600,4.500 l-3.400,-4.500 h-4 v-5.100 h3.400z" fill="#ffffff"/></g></svg>
</div>
<div class="right wx">
<span class="l" style="left:6px;top:-0.5px">Print settings:</span>
<div class="box" style="left:6px;top:18px;width:445px;height:25px;border-color:#e0702f;background:#2e2e2e"></div>
<span class="v" style="left:57.5px;top:21.5px">0.20mm SPEED</span>
<span class="l" style="left:6px;top:43.5px">Filament:</span>
<div class="box" style="left:6px;top:62px;width:445px;height:25px;background:#2e2e2e"></div>
<div class="abs" style="left:10px;top:66px;width:22px;height:14px;background:#008000;border:1px solid #bdbdbd"></div>
<span class="v" style="left:57.5px;top:65.5px">Overture High Speed TPU</span>
<span class="l" style="left:6px;top:87.5px">Printer:</span>
<div class="box" style="left:6px;top:106px;width:445px;height:25px;background:#2e2e2e"></div>
<span class="v" style="left:47.5px;top:109.5px">MK4 Link * Original Prusa MK4 Input Shaper 0.4 nozzle</span>
<span class="l" style="left:8px;top:141.5px">Supports:</span>
<div class="box" style="left:73px;top:138px;width:378px;height:25px;background:#2e2e2e"></div>
<span class="v" style="left:77px;top:141.5px">None</span>
<span class="l" style="left:8px;top:169.5px">Infill:</span>
<div class="box" style="left:44px;top:166.5px;width:96px;height:24.0px;background:#2e2e2e"></div>
<span class="v" style="left:49.5px;top:169.5px">15%</span>
<svg class="abs" style="left:121px;top:174px" width="14" height="9" viewBox="0 0 14 9"><polyline points="1.5,1.5 7,6.5 12.5,1.5" fill="none" stroke="#7a7a7a" stroke-width="1.5"/></svg>
<span class="l" style="left:164.5px;top:169.5px">Brim:</span>
<div class="box" style="left:204px;top:171px;width:14px;height:14px;background:#2b2b2b;border-color:#5a5a5a"></div>
<svg class="abs" style="left:12px;top:21px" width="44" height="20" viewBox="0 0 44 20"><circle cx="10" cy="9.500" r="6.300" fill="none" stroke="#e8e8e8" stroke-width="2.200" stroke-dasharray="2.400 2.550"/><circle cx="10" cy="9.500" r="5.300" fill="none" stroke="#e8e8e8" stroke-width="1.400"/><circle cx="10" cy="9.500" r="3.200" fill="none" stroke="#e8702a" stroke-width="1.300"/><path d="M28.500,8.500 v-2.500 a3.500,3.500 0 0 1 7,0 v2.500" fill="none" stroke="#f2f2f2" stroke-width="1.800"/><rect x="26.500" y="8.500" width="11" height="8.500" rx="1" fill="#f2f2f2"/><path d="M31.500,11 l3,2 l-3,2z" fill="#2b2b2b"/></svg>
<svg class="abs" style="left:34px;top:65px" width="22" height="20" viewBox="22 0 22 20"><path d="M28.500,8.500 v-2.500 a3.500,3.500 0 0 1 7,0 v2.500" fill="none" stroke="#f2f2f2" stroke-width="1.800"/><rect x="26.500" y="8.500" width="11" height="8.500" rx="1" fill="#f2f2f2"/><path d="M31.500,11 l3,2 l-3,2z" fill="#2b2b2b"/></svg>
<svg class="abs" style="left:10px;top:110px" width="18" height="16" viewBox="0 0 18 16"><rect x="1.500" y="1.500" width="13.500" height="12.500" fill="none" stroke="#f2f2f2" stroke-width="1.300"/><line x1="1.500" y1="6" x2="15" y2="6" stroke="#f2f2f2" stroke-width="1.200"/><rect x="2.500" y="2.500" width="3.500" height="3.500" fill="#e8702a"/></svg>
<div class="abs" style="left:7px;top:199px;width:440px;height:749px;background:#313131;border-left:1px solid #262626;border-bottom:1px solid #262626;border-top:1px solid #262626"></div>
<div class="vline" style="left:246.5px;top:200px;height:23px;background:#3c3c3c"></div><div class="vline" style="left:282px;top:200px;height:23px;background:#3c3c3c"></div>
<span class="b hd" style="left:14.5px;top:201px">Name</span>
<span class="b hd" style="left:363.5px;top:201px">Editing</span>
<div class="abs" style="left:8px;top:224px;width:440px;height:19px;background:#1651a0"></div>
<span class="v" style="left:27px;top:224px">tire.stl</span>
<svg class="abs" style="left:256px;top:226px" width="18" height="14" viewBox="-9 -7 18 14"><path d="M-7.500,0 C-4,-5.500 4,-5.500 7.500,0 C4,5.500 -4,5.500 -7.500,0z" fill="none" stroke="#ffffff" stroke-width="1.500"/><circle r="2.300" fill="#ffffff"/></svg>
<svg class="abs" style="left:381px;top:225px" width="16" height="16" viewBox="0 0 16 16"><path d="M8,4 h-5 v10 h9 v-6" fill="none" stroke="#ffffff" stroke-width="1.300"/><circle cx="11.500" cy="4.500" r="2.300" fill="none" stroke="#e8702a" stroke-width="1.300"/></svg>
<span class="b" style="left:11px;top:954.5px">Object manipulation</span>
<div class="hline" style="left:169px;top:964.5px;width:300px"></div>
<div class="vline" style="left:6px;top:970px;height:202px"></div><div class="hline" style="left:6px;top:1172px;width:440px"></div>
<div class="box" style="left:10px;top:976px;width:180px;height:25px;background:#2e2e2e;border-color:#646464"></div>
<span class="v" style="left:14px;top:979px">World coordinates</span>
<svg class="abs" style="left:171px;top:984px" width="14" height="9" viewBox="0 0 14 9"><polyline points="1.500,1.500 7,6.500 12.500,1.500" fill="none" stroke="#7a7a7a" stroke-width="1.500"/></svg>
<span class="b" style="left:212px;top:979px">X</span>
<svg class="abs" style="left:226.5px;top:980.5px" width="17" height="15" viewBox="0 0 17 15"><rect x="2" y="2.200" width="12.500" height="10.600" rx="2.200" fill="none" stroke="#050505" stroke-width="2.300"/><rect x="7.300" y="0" width="2" height="15" fill="#2b2b2b"/><line x1="8.300" y1="5.500" x2="8.300" y2="9.500" stroke="#050505" stroke-width="1.100"/></svg>
<span class="b" style="left:284px;top:979px">Y</span>
<svg class="abs" style="left:298.5px;top:980.5px" width="17" height="15" viewBox="0 0 17 15"><rect x="2" y="2.200" width="12.500" height="10.600" rx="2.200" fill="none" stroke="#050505" stroke-width="2.300"/><rect x="7.300" y="0" width="2" height="15" fill="#2b2b2b"/><line x1="8.300" y1="5.500" x2="8.300" y2="9.500" stroke="#050505" stroke-width="1.100"/></svg>
<span class="b" style="left:356px;top:979px">Z</span>
<svg class="abs" style="left:370.5px;top:980.5px" width="17" height="15" viewBox="0 0 17 15"><rect x="2" y="2.200" width="12.500" height="10.600" rx="2.200" fill="none" stroke="#050505" stroke-width="2.300"/><rect x="7.300" y="0" width="2" height="15" fill="#2b2b2b"/><line x1="8.300" y1="5.500" x2="8.300" y2="9.500" stroke="#050505" stroke-width="1.100"/></svg>
<span class="l" style="left:10px;top:1011.5px">Position:</span>
<div class="inp" style="left:193px;top:1008.0px"><span>125</span></div>
<div class="inp" style="left:265px;top:1008.0px"><span>105</span></div>
<div class="inp" style="left:337px;top:1008.0px"><span>32.5</span></div>
<span class="l" style="left:409.5px;top:1011.5px">mm</span>
<span class="l" style="left:10px;top:1048.5px">Rotate (relative):</span>
<div class="inp" style="left:193px;top:1045.0px"><span>0</span></div>
<div class="inp" style="left:265px;top:1045.0px"><span>0</span></div>
<div class="inp" style="left:337px;top:1045.0px"><span>0</span></div>
<span class="l" style="left:409.5px;top:1048.5px">°</span>
<span class="l" style="left:30px;top:1085.5px">Scale factors:</span>
<div class="inp" style="left:193px;top:1082.0px"><span>100</span></div>
<div class="inp" style="left:265px;top:1082.0px"><span>100</span></div>
<div class="inp" style="left:337px;top:1082.0px"><span>100</span></div>
<span class="l" style="left:409.5px;top:1085.5px">%</span>
<span class="l" style="left:30px;top:1122.5px">Size [World]:</span>
<div class="inp" style="left:193px;top:1119.0px"><span>169.98</span></div>
<div class="inp" style="left:265px;top:1119.0px"><span>169.98</span></div>
<div class="inp" style="left:337px;top:1119.0px"><span>65</span></div>
<span class="l" style="left:409.5px;top:1122.5px">mm</span>
<svg class="abs" style="left:11px;top:1104px" width="14" height="17" viewBox="25 3 14 17"><path d="M28.500,9.500 v-2.500 a3.500,3.500 0 0 1 7,0 v2.500" fill="none" stroke="#f2f2f2" stroke-width="1.800"/><rect x="26.500" y="9.500" width="11" height="8.500" rx="1" fill="#f2f2f2"/><path d="M31,12 h2.500 v3.500 h-2.500z" fill="#2b2b2b"/></svg>
<div class="box" style="left:12px;top:1154px;width:14px;height:13px;background:#2b2b2b;border-color:#4e4e4e"></div>
<span class="l" style="left:29px;top:1151.5px">Inches</span>
<span class="b" style="left:6.5px;top:1178.5px">Info</span>
<div class="hline" style="left:38px;top:1188.5px;width:420px"></div>
<div class="vline" style="left:6px;top:1194px;height:61px"></div><div class="hline" style="left:6px;top:1255px;width:440px"></div>
<span class="l" style="left:6.5px;top:1196px">Size:</span>
<span class="l n" style="left:67.5px;top:1196px">169.98 x 169.98 x 65.00</span>
<span class="l" style="left:239px;top:1196px">Volume:</span>
<span class="l n" style="left:308.5px;top:1196px">247234.14</span>
<span class="l" style="left:6.5px;top:1217.5px">Facets:</span>
<span class="l n" style="left:67.5px;top:1217.5px">1728 (1 shell)</span>
<span class="l" style="left:8.5px;top:1238.5px">No errors detected</span>
<span class="b" style="left:6.5px;top:1261.5px">Sliced Info</span>
<div class="hline" style="left:90px;top:1271.5px;width:420px"></div>
<div class="vline" style="left:6px;top:1277px;height:140px"></div><div class="hline" style="left:6px;top:1417px;width:440px"></div>
<span class="l" style="left:6.5px;top:1278.5px">Used Filament (g)</span>
<span class="l n" style="left:180.5px;top:1278.5px">136.17</span>
<span class="l" style="left:6.5px;top:1300.5px">Used Filament (m)</span>
<span class="l n" style="left:180.5px;top:1300.5px">47.57</span>
<span class="l" style="left:6.5px;top:1322.5px">Used Filament (mm³)</span>
<span class="l n" style="left:180.5px;top:1322.5px">114428.40</span>
<span class="l" style="left:6.5px;top:1344.5px">Cost</span>
<span class="l n" style="left:180.5px;top:1344.5px">11.57</span>
<span class="l" style="left:6.5px;top:1366.5px">Estimated printing time:</span>
<span class="l" style="left:18px;top:1383.5px">- normal mode</span>
<span class="l n" style="left:180.5px;top:1383.5px">6h38m</span>
<span class="l" style="left:18px;top:1400.5px">- stealth mode</span>
<span class="l n" style="left:180.5px;top:1400.5px">7h12m</span>
<div class="abs" style="left:6.5px;top:1425px;width:445px;height:40px;background:#303030;border:1px solid #262626;border-radius:6px;box-sizing:border-box"></div>
<span class="b" style="left:169px;top:1435.5px">Export G-code</span>
</div>
<div class="bottomline"></div>
</body></html>
